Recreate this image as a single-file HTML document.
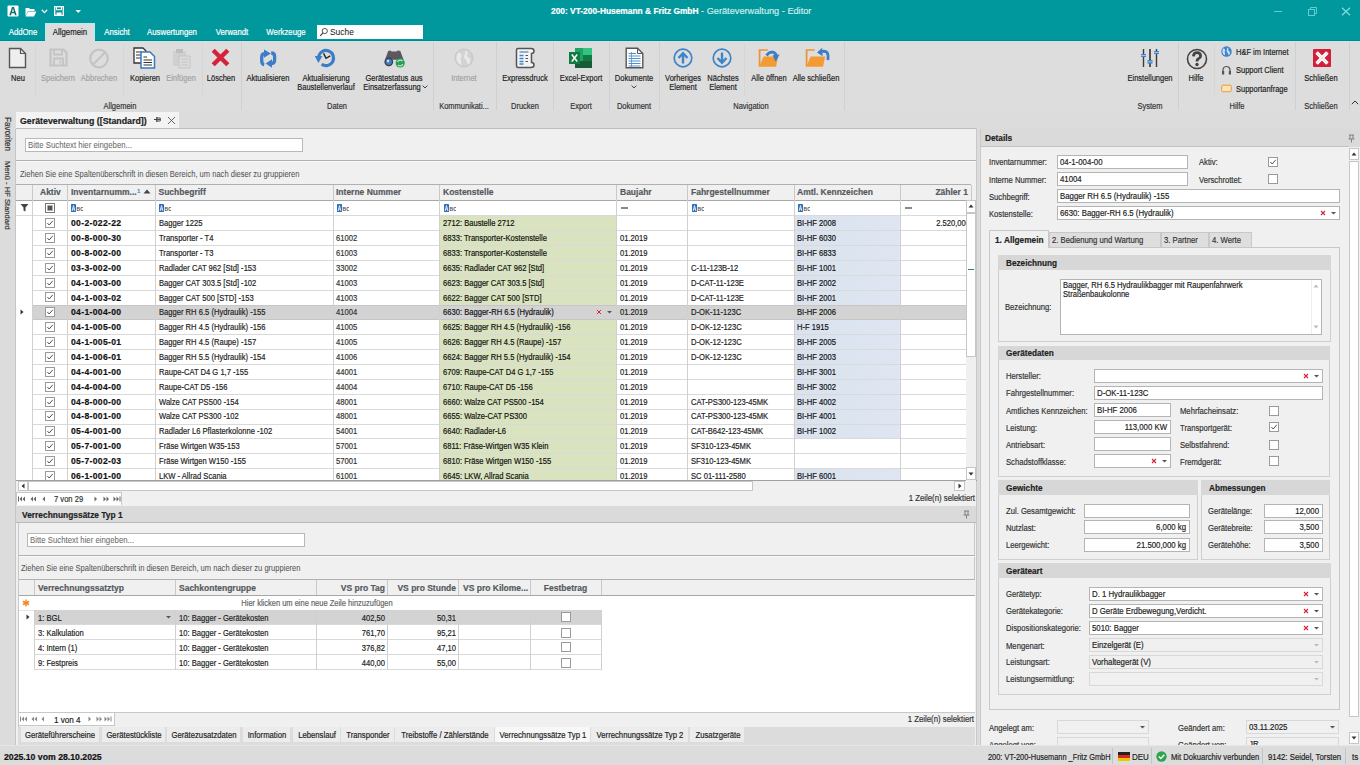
<!DOCTYPE html>
<html><head><meta charset="utf-8"><style>
html,body{margin:0;padding:0;width:1360px;height:765px;overflow:hidden;background:#dcdcdc}
body{position:relative;font-family:"Liberation Sans",sans-serif}
body div{position:absolute;box-sizing:border-box;-webkit-text-stroke:0.18px currentColor}
</style></head><body>
<div style="left:0px;top:0px;width:1360px;height:41px;background:#00979d"></div><div style="left:0px;top:40px;width:1360px;height:1px;background:#167f86"></div><svg style="position:absolute;left:7px;top:5px" width="12" height="12" viewBox="0 0 12 12"><rect x="0.5" y="0.5" width="11" height="11" rx="1" fill="#fff"/><path d="M2.3 10.2 L5 2 L7 2 L9.7 10.2 L8 10.2 L7.4 8.2 L4.6 8.2 L4 10.2Z M5 6.8 L7 6.8 L6 3.6Z" fill="#0b6f74"/></svg><svg style="position:absolute;left:25px;top:6px" width="12" height="11" viewBox="0 0 12 11"><path d="M0.5 2 L4 2 L5 3 L9.5 3 L9.5 5 L3 5 L0.5 10Z" fill="#fff"/><path d="M3 5.5 L11.5 5.5 L9 10.5 L0.5 10.5Z" fill="#fff"/></svg><svg style="position:absolute;left:41px;top:9px" width="7" height="5" viewBox="0 0 7 5"><path d="M0.8 0.8 L3.5 3.6 L6.2 0.8" stroke="#fff" stroke-width="1.3" fill="none"/></svg><svg style="position:absolute;left:54px;top:6px" width="10" height="10" viewBox="0 0 10 10"><path d="M0.7 0.7 H9.3 V9.3 H0.7Z" stroke="#fff" stroke-width="1.3" fill="none"/><rect x="2.5" y="0.7" width="5" height="3" fill="none" stroke="#fff" stroke-width="1"/><rect x="2.5" y="6.5" width="5" height="2.8" fill="#fff"/></svg><svg style="position:absolute;left:75px;top:9px" width="7" height="5" viewBox="0 0 7 5"><path d="M0.5 1 L6 1 L3.25 4Z" fill="#fff"/></svg><div style="left:551px;top:5px;height:12px;line-height:12px;white-space:nowrap;font-size:8.4px;color:#fff"><b>200: VT-200-Husemann &amp; Fritz GmbH</b><span style="color:#cfeeee;font-size:9.2px"> - Geräteverwaltung - Editor</span></div><div style="left:1274px;top:11px;width:7.5px;height:1px;background:#62cdd2"></div><svg style="position:absolute;left:1307px;top:7px" width="10" height="9" viewBox="0 0 10 9"><rect x="1.5" y="2.5" width="6" height="6" fill="none" stroke="#62cdd2"/><path d="M3.5 2.5 V0.5 H9.5 V6.5 H7.5" fill="none" stroke="#62cdd2"/></svg><svg style="position:absolute;left:1341px;top:7px" width="10" height="9" viewBox="0 0 10 9"><path d="M1 0.8 L9 8.2 M9 0.8 L1 8.2" stroke="#7fe0e4" stroke-width="1.2"/></svg><div style="left:-7.5px;width:60px;text-align:center;top:26.0px;height:12px;line-height:12px;font-size:8.5px;font-weight:normal;color:#fff;white-space:nowrap;transform:scaleX(0.9176);transform-origin:center center;">AddOne</div><div style="left:45px;top:23px;width:50px;height:19px;background:#dddddd;border:1px solid #aeeff2;border-bottom:none;box-sizing:border-box"></div><div style="left:40.0px;width:60px;text-align:center;top:26.0px;height:12px;line-height:12px;font-size:8.5px;font-weight:normal;color:#222;white-space:nowrap;transform:scaleX(0.9176);transform-origin:center center;">Allgemein</div><div style="left:86.5px;width:60px;text-align:center;top:26.0px;height:12px;line-height:12px;font-size:8.5px;font-weight:normal;color:#fff;white-space:nowrap;transform:scaleX(0.9176);transform-origin:center center;">Ansicht</div><div style="left:132.0px;width:80px;text-align:center;top:26.0px;height:12px;line-height:12px;font-size:8.5px;font-weight:normal;color:#fff;white-space:nowrap;transform:scaleX(0.9176);transform-origin:center center;">Auswertungen</div><div style="left:201.5px;width:60px;text-align:center;top:26.0px;height:12px;line-height:12px;font-size:8.5px;font-weight:normal;color:#fff;white-space:nowrap;transform:scaleX(0.9176);transform-origin:center center;">Verwandt</div><div style="left:255.5px;width:60px;text-align:center;top:26.0px;height:12px;line-height:12px;font-size:8.5px;font-weight:normal;color:#fff;white-space:nowrap;transform:scaleX(0.9176);transform-origin:center center;">Werkzeuge</div><div style="left:317px;top:25px;width:106px;height:14px;background:#fff"></div><svg style="position:absolute;left:319px;top:27px" width="10" height="10" viewBox="0 0 10 10"><circle cx="5.8" cy="4" r="2.6" fill="none" stroke="#444" stroke-width="0.9"/><path d="M3.9 6 L1.2 8.8" stroke="#444" stroke-width="1.1"/></svg><div style="left:329.5px;top:26.0px;height:12px;line-height:12px;font-size:8.5px;font-weight:normal;color:#111;white-space:nowrap;transform:scaleX(0.9882);transform-origin:left center;-webkit-text-stroke:0">Suche</div><div style="left:0px;top:41px;width:1360px;height:71px;background:#dddddd"></div><div style="left:0px;top:41px;width:1360px;height:1px;background:#aeeff2"></div><div style="left:45px;top:40px;width:50px;height:2px;background:#dddddd"></div><div style="left:0px;top:111px;width:1360px;height:1px;background:#cdcdcd"></div><div style="left:241px;top:42px;width:1px;height:68px;background:#d0d0d0"></div><div style="left:433px;top:42px;width:1px;height:68px;background:#d0d0d0"></div><div style="left:496px;top:42px;width:1px;height:68px;background:#d0d0d0"></div><div style="left:553px;top:42px;width:1px;height:68px;background:#d0d0d0"></div><div style="left:609px;top:42px;width:1px;height:68px;background:#d0d0d0"></div><div style="left:659px;top:42px;width:1px;height:68px;background:#d0d0d0"></div><div style="left:844px;top:42px;width:1px;height:68px;background:#d0d0d0"></div><div style="left:1178px;top:42px;width:1px;height:68px;background:#d0d0d0"></div><div style="left:1295px;top:42px;width:1px;height:68px;background:#d0d0d0"></div><div style="left:1349px;top:42px;width:1px;height:68px;background:#d0d0d0"></div><div style="left:35px;top:44px;width:1px;height:51px;background:#d6d6d6"></div><div style="left:123px;top:44px;width:1px;height:51px;background:#d6d6d6"></div><div style="left:202px;top:44px;width:1px;height:51px;background:#d6d6d6"></div><div style="left:744px;top:44px;width:1px;height:51px;background:#d6d6d6"></div><div style="left:1214px;top:44px;width:1px;height:51px;background:#d6d6d6"></div><svg style="position:absolute;left:8px;top:47px" width="20" height="22" viewBox="0 0 20 22"><path d="M1.5 1.5 H12.5 L17.5 6.5 V20.5 H1.5Z" fill="#eeeeee" stroke="#555" stroke-width="1.4" stroke-linejoin="miter"/><path d="M12.5 1.5 V6.5 H17.5" fill="none" stroke="#555" stroke-width="1.2"/></svg><div style="left:-42.5px;width:120px;text-align:center;top:71.5px;height:12px;line-height:12px;font-size:8.5px;font-weight:normal;color:#222;white-space:nowrap;transform:scaleX(0.8824);transform-origin:center center;">Neu</div><svg style="position:absolute;left:49px;top:48px" width="19" height="19" viewBox="0 0 19 19"><path d="M1.5 1.5 H14.5 L17.5 4.5 V17.5 H1.5Z" fill="none" stroke="#c4c4c4" stroke-width="2.2"/><path d="M5 2 V6.5 H13 V2" fill="none" stroke="#c4c4c4" stroke-width="1.8"/><path d="M5 17 V10.5 H14 V17" fill="none" stroke="#c4c4c4" stroke-width="1.8"/><rect x="10.5" y="12.5" width="1.6" height="3" fill="#c4c4c4"/></svg><div style="left:-2.0px;width:120px;text-align:center;top:71.5px;height:12px;line-height:12px;font-size:8.5px;font-weight:normal;color:#a3a3a3;white-space:nowrap;transform:scaleX(0.8824);transform-origin:center center;">Speichern</div><svg style="position:absolute;left:88px;top:47px" width="22" height="22" viewBox="0 0 22 22"><circle cx="11" cy="11.5" r="8.8" fill="none" stroke="#c4c4c4" stroke-width="2.2"/><path d="M5 17.5 L17 5.5" stroke="#c4c4c4" stroke-width="2.2"/></svg><div style="left:39.0px;width:120px;text-align:center;top:71.5px;height:12px;line-height:12px;font-size:8.5px;font-weight:normal;color:#a3a3a3;white-space:nowrap;transform:scaleX(0.8824);transform-origin:center center;">Abbrechen</div><svg style="position:absolute;left:133px;top:47px" width="24" height="22" viewBox="0 0 24 22"><path d="M1 1 H10 L13 4 V16 H1Z" fill="#fff" stroke="#333" stroke-width="1.3"/><path d="M3 5 H9 M3 8 H9 M3 11 H9" stroke="#333" stroke-width="1"/><path d="M8 5 H17 L21.5 9.5 V21 H8Z" fill="#fff" stroke="#3a78c0" stroke-width="1.5"/><path d="M10.5 10 H14 M10.5 13 H19 M10.5 15.5 H19 M10.5 18 H19" stroke="#333" stroke-width="1.2"/></svg><div style="left:84.5px;width:120px;text-align:center;top:71.5px;height:12px;line-height:12px;font-size:8.5px;font-weight:normal;color:#222;white-space:nowrap;transform:scaleX(0.8824);transform-origin:center center;">Kopieren</div><svg style="position:absolute;left:172px;top:48px" width="20" height="21" viewBox="0 0 20 21"><path d="M1 3 H14 V18 H1Z" fill="#d0d0d0"/><rect x="4" y="1" width="7" height="4" fill="#bdbdbd"/><path d="M7 8 H18 V20 H7Z" fill="#dcdcdc" stroke="#c4c4c4"/><path d="M9 11 H16 M9 14 H16 M9 17 H16" stroke="#c4c4c4"/></svg><div style="left:121.0px;width:120px;text-align:center;top:71.5px;height:12px;line-height:12px;font-size:8.5px;font-weight:normal;color:#a3a3a3;white-space:nowrap;transform:scaleX(0.8824);transform-origin:center center;">Einfügen</div><svg style="position:absolute;left:211px;top:48px" width="19" height="19" viewBox="0 0 19 19"><path d="M2.2 2.2 L16.8 16.8 M16.8 2.2 L2.2 16.8" stroke="#d5223a" stroke-width="4.4" stroke-linecap="butt"/></svg><div style="left:160.5px;width:120px;text-align:center;top:71.5px;height:12px;line-height:12px;font-size:8.5px;font-weight:normal;color:#222;white-space:nowrap;transform:scaleX(0.8824);transform-origin:center center;">Löschen</div><div style="left:60.0px;width:120px;text-align:center;top:99.5px;height:12px;line-height:12px;font-size:8.5px;font-weight:normal;color:#333;white-space:nowrap;transform:scaleX(0.8824);transform-origin:center center;">Allgemein</div><svg style="position:absolute;left:259px;top:49px" width="19" height="20" viewBox="0 0 19 20"><path d="M6 4.6 Q2.7 4.6 2.7 8.2 V11.8 Q2.7 15.3 5.2 15.6" fill="none" stroke="#3b7dc6" stroke-width="3.3"/><path d="M5 0.5 L11.9 4.6 L5 8.8Z" fill="#3b7dc6"/><path d="M12.2 4 Q15.6 4 15.6 7.4 V11 Q15.6 14.4 12.8 14.5" fill="none" stroke="#3b7dc6" stroke-width="3.3"/><path d="M13 10.2 L6.6 14.5 L13 18.8Z" fill="#3b7dc6"/></svg><div style="left:208.0px;width:120px;text-align:center;top:71.5px;height:12px;line-height:12px;font-size:8.5px;font-weight:normal;color:#222;white-space:nowrap;transform:scaleX(0.8824);transform-origin:center center;">Aktualisieren</div><svg style="position:absolute;left:313px;top:47px" width="24" height="22" viewBox="0 0 24 22"><path d="M8.6 17.3 A7.6 7.6 0 1 0 5.6 9.2" fill="none" stroke="#3b7dc6" stroke-width="3.2"/><path d="M1.8 9 L9.4 9 L5.4 15.9Z" fill="#3b7dc6"/><path d="M10.6 6.4 L13 11.3 L17.3 8.8" fill="none" stroke="#2a2a2a" stroke-width="1.5"/></svg><div style="left:265.5px;width:120px;text-align:center;top:71.5px;height:12px;line-height:12px;font-size:8.5px;font-weight:normal;color:#222;white-space:nowrap;transform:scaleX(0.8824);transform-origin:center center;">Aktualisierung</div><div style="left:265.5px;width:120px;text-align:center;top:81.3px;height:12px;line-height:12px;font-size:8.5px;font-weight:normal;color:#222;white-space:nowrap;transform:scaleX(0.8824);transform-origin:center center;">Baustellenverlauf</div><svg style="position:absolute;left:383px;top:49px" width="22" height="20" viewBox="0 0 22 20"><path d="M5.2 2 Q5.6 1.5 7.5 1.5 L8.6 2.6 L13.6 2.6 L14.7 1.5 Q16.8 1.5 17.3 2 L20.6 10.8 L2 10.8Z" fill="#5a5a5e"/><circle cx="5.8" cy="12.8" r="4.4" fill="#3e3e42"/><circle cx="5.8" cy="12.8" r="3.1" fill="#3f7fcc"/><circle cx="5" cy="12" r="1.2" fill="#cfe3f7"/><circle cx="17.2" cy="14" r="4.6" fill="#2f9a57"/><path d="M14.6 13 A2.7 2.7 0 0 1 19.4 12.2 M19.8 15 A2.7 2.7 0 0 1 15 15.8" stroke="#a9efc0" stroke-width="1.3" fill="none"/></svg><div style="left:334.0px;width:120px;text-align:center;top:71.5px;height:12px;line-height:12px;font-size:8.5px;font-weight:normal;color:#222;white-space:nowrap;transform:scaleX(0.8824);transform-origin:center center;">Gerätestatus aus</div><div style="left:332.0px;width:120px;text-align:center;top:81.3px;height:12px;line-height:12px;font-size:8.5px;font-weight:normal;color:#222;white-space:nowrap;transform:scaleX(0.8824);transform-origin:center center;">Einsatzerfassung</div><svg style="position:absolute;left:422px;top:85px" width="6" height="4" viewBox="0 0 6 4"><path d="M0.6 0.6 L3 3 L5.4 0.6" stroke="#333" fill="none" stroke-width="0.9"/></svg><div style="left:277.0px;width:120px;text-align:center;top:99.5px;height:12px;line-height:12px;font-size:8.5px;font-weight:normal;color:#333;white-space:nowrap;transform:scaleX(0.8824);transform-origin:center center;">Daten</div><svg style="position:absolute;left:454px;top:48px" width="20" height="20" viewBox="0 0 20 20"><circle cx="10" cy="10" r="9" fill="#d2d2d2" stroke="#c6c6c6" stroke-width="1"/><path d="M4.5 4.2 Q8 5.5 7.5 8.5 Q5.5 10.5 7.5 13.5 L6.8 17 Q2.5 14.5 2.5 10 Q2.5 6.5 4.5 4.2Z M11.5 2.5 Q15 4 13.2 6.5 Q12 8.5 15 9.5 Q17.5 11.5 15.2 15.8 Q13.2 17 13 14 Q12.2 12 11 11 Q9 9 11 6Z" fill="#e9e9e9"/></svg><div style="left:404.0px;width:120px;text-align:center;top:71.5px;height:12px;line-height:12px;font-size:8.5px;font-weight:normal;color:#a3a3a3;white-space:nowrap;transform:scaleX(0.8824);transform-origin:center center;">Internet</div><div style="left:404.0px;width:120px;text-align:center;top:99.5px;height:12px;line-height:12px;font-size:8.5px;font-weight:normal;color:#333;white-space:nowrap;transform:scaleX(0.8824);transform-origin:center center;">Kommunikati...</div><svg style="position:absolute;left:515px;top:47px" width="22" height="22" viewBox="0 0 22 22"><path d="M3 1.5 H16 Q19 1.5 19 4 Q19 6.5 16.5 6.5 L16.5 15.5 Q19 15.5 19 18 Q19 20.5 16 20.5 H3 Q1.5 20.5 1.5 19 V3 Q1.5 1.5 3 1.5Z" fill="#f4f4f4" stroke="#555" stroke-width="1.5"/><path d="M4.5 5 H13.5" stroke="#3d84c8" stroke-width="1.2"/><path d="M4.5 8.5 H8.5 M4.5 11.5 H8.5 M4.5 14.5 H8.5 M4.5 17 H8.5" stroke="#3d84c8" stroke-width="1.3"/><path d="M10.5 8.5 H13 M10.5 11.5 H13 M10.5 14.5 H13" stroke="#555" stroke-width="1.2"/></svg><div style="left:464.5px;width:120px;text-align:center;top:71.5px;height:12px;line-height:12px;font-size:8.5px;font-weight:normal;color:#222;white-space:nowrap;transform:scaleX(0.8824);transform-origin:center center;">Expressdruck</div><div style="left:464.5px;width:120px;text-align:center;top:99.5px;height:12px;line-height:12px;font-size:8.5px;font-weight:normal;color:#333;white-space:nowrap;transform:scaleX(0.8824);transform-origin:center center;">Drucken</div><svg style="position:absolute;left:569px;top:48px" width="24" height="21" viewBox="0 0 24 21"><rect x="6" y="0" width="17" height="20" fill="#21a366"/><rect x="14" y="0" width="9" height="7" fill="#33c481"/><rect x="6" y="13" width="17" height="7" fill="#185c37"/><rect x="14" y="7" width="9" height="6" fill="#107c41"/><rect x="0" y="4" width="11" height="12" fill="#107c41"/><path d="M2.8 6.5 L8.2 13.5 M8.2 6.5 L2.8 13.5" stroke="#fff" stroke-width="1.5"/></svg><div style="left:521.0px;width:120px;text-align:center;top:71.5px;height:12px;line-height:12px;font-size:8.5px;font-weight:normal;color:#222;white-space:nowrap;transform:scaleX(0.8824);transform-origin:center center;">Excel-Export</div><div style="left:520.5px;width:120px;text-align:center;top:99.5px;height:12px;line-height:12px;font-size:8.5px;font-weight:normal;color:#333;white-space:nowrap;transform:scaleX(0.8824);transform-origin:center center;">Export</div><svg style="position:absolute;left:625px;top:47px" width="19" height="22" viewBox="0 0 19 22"><path d="M1.2 1.2 H12.5 L17.8 6.5 V20.8 H1.2Z" fill="#fff" stroke="#555" stroke-width="1.4"/><path d="M12.5 1.2 V6.5 H17.8" fill="none" stroke="#555" stroke-width="1"/><path d="M3.5 6.5 H11 M3.5 9 H15.5 M3.5 11.5 H15.5 M3.5 14 H15.5 M3.5 16.5 H15.5 M3.5 19 H15.5" stroke="#4e8fd0" stroke-width="1"/><path d="M6.5 5 V20" stroke="#4e8fd0" stroke-width="0.8"/></svg><div style="left:573.5px;width:120px;text-align:center;top:71.5px;height:12px;line-height:12px;font-size:8.5px;font-weight:normal;color:#222;white-space:nowrap;transform:scaleX(0.8824);transform-origin:center center;">Dokumente</div><div style="left:573.5px;width:120px;text-align:center;top:99.5px;height:12px;line-height:12px;font-size:8.5px;font-weight:normal;color:#333;white-space:nowrap;transform:scaleX(0.8824);transform-origin:center center;">Dokument</div><svg style="position:absolute;left:631px;top:85px" width="6" height="4" viewBox="0 0 6 4"><path d="M0.6 0.6 L3 3 L5.4 0.6" stroke="#333" fill="none" stroke-width="0.9"/></svg><svg style="position:absolute;left:673px;top:48px" width="20" height="20" viewBox="0 0 20 20"><circle cx="10" cy="10" r="8.8" fill="none" stroke="#3d84c8" stroke-width="1.7"/><path d="M10 15.5 V5.5 M5.5 10 L10 5.2 L14.5 10" fill="none" stroke="#3d84c8" stroke-width="2.4"/></svg><div style="left:623.0px;width:120px;text-align:center;top:71.5px;height:12px;line-height:12px;font-size:8.5px;font-weight:normal;color:#222;white-space:nowrap;transform:scaleX(0.8824);transform-origin:center center;">Vorheriges</div><div style="left:623.0px;width:120px;text-align:center;top:81.3px;height:12px;line-height:12px;font-size:8.5px;font-weight:normal;color:#222;white-space:nowrap;transform:scaleX(0.8824);transform-origin:center center;">Element</div><svg style="position:absolute;left:712px;top:48px" width="20" height="20" viewBox="0 0 20 20"><circle cx="10" cy="10" r="8.8" fill="none" stroke="#3d84c8" stroke-width="1.7"/><path d="M10 4.5 V14.5 M5.5 10 L10 14.8 L14.5 10" fill="none" stroke="#3d84c8" stroke-width="2.4"/></svg><div style="left:662.5px;width:120px;text-align:center;top:71.5px;height:12px;line-height:12px;font-size:8.5px;font-weight:normal;color:#222;white-space:nowrap;transform:scaleX(0.8824);transform-origin:center center;">Nächstes</div><div style="left:662.5px;width:120px;text-align:center;top:81.3px;height:12px;line-height:12px;font-size:8.5px;font-weight:normal;color:#222;white-space:nowrap;transform:scaleX(0.8824);transform-origin:center center;">Element</div><svg style="position:absolute;left:757px;top:47px" width="28" height="22" viewBox="0 0 28 22"><path d="M2.6 19.6 V3 H10.8" fill="none" stroke="#ec9235" stroke-width="1.7"/><path d="M6.6 9.6 L21.2 9.6 L19 19.8 L2.2 19.8Z" fill="#f39a33"/><path d="M9.5 8.5 Q14.5 1.8 19.6 8" fill="none" stroke="#3b7dc6" stroke-width="2.8"/><path d="M15.6 8.2 L22.6 7.6 L18.6 14.8Z" fill="#3b7dc6"/></svg><div style="left:708.5px;width:120px;text-align:center;top:71.5px;height:12px;line-height:12px;font-size:8.5px;font-weight:normal;color:#222;white-space:nowrap;transform:scaleX(0.8824);transform-origin:center center;">Alle öffnen</div><svg style="position:absolute;left:804px;top:47px" width="28" height="22" viewBox="0 0 28 22"><path d="M2.6 19.6 V3 H10.8" fill="none" stroke="#ec9235" stroke-width="1.7"/><path d="M6.6 9.6 L21.2 9.6 L19 19.8 L2.2 19.8Z" fill="#f39a33"/><path d="M23.8 13 Q25.5 2.5 17.5 4.6" fill="none" stroke="#3b7dc6" stroke-width="2.8"/><path d="M18.2 0.8 L13 5.6 L18.6 9.2Z" fill="#3b7dc6"/></svg><div style="left:755.5px;width:120px;text-align:center;top:71.5px;height:12px;line-height:12px;font-size:8.5px;font-weight:normal;color:#222;white-space:nowrap;transform:scaleX(0.8824);transform-origin:center center;">Alle schließen</div><div style="left:690.5px;width:120px;text-align:center;top:99.5px;height:12px;line-height:12px;font-size:8.5px;font-weight:normal;color:#333;white-space:nowrap;transform:scaleX(0.8824);transform-origin:center center;">Navigation</div><svg style="position:absolute;left:1140px;top:48px" width="20" height="20" viewBox="0 0 20 20"><path d="M3.5 1 V19 M16.5 1 V19" stroke="#3c3c3c" stroke-width="1.4"/><path d="M10 1 V19" stroke="#555" stroke-width="2"/><rect x="1" y="6" width="5" height="3" fill="#3d84c8"/><rect x="7.5" y="12" width="5" height="3.6" fill="#3d84c8"/><rect x="14" y="3" width="5" height="3" fill="#3d84c8"/><path d="M1 7.5 H6 M7.5 13.8 H12.5 M14 4.5 H19" stroke="#bfe0fb" stroke-width="0.7"/></svg><div style="left:1089.5px;width:120px;text-align:center;top:71.5px;height:12px;line-height:12px;font-size:8.5px;font-weight:normal;color:#222;white-space:nowrap;transform:scaleX(0.8824);transform-origin:center center;">Einstellungen</div><div style="left:1089.5px;width:120px;text-align:center;top:99.5px;height:12px;line-height:12px;font-size:8.5px;font-weight:normal;color:#333;white-space:nowrap;transform:scaleX(0.8824);transform-origin:center center;">System</div><svg style="position:absolute;left:1186px;top:48px" width="22" height="22" viewBox="0 0 22 22"><circle cx="11" cy="11" r="9.5" fill="none" stroke="#444" stroke-width="1.6"/><path d="M7.4 8.4 Q7.6 4.6 11 4.6 Q14.6 4.6 14.6 7.9 Q14.6 9.8 12.4 10.8 Q11 11.5 11 13.4" fill="none" stroke="#444" stroke-width="2.8"/><circle cx="11" cy="16.5" r="1.7" fill="#444"/></svg><div style="left:1136.0px;width:120px;text-align:center;top:71.5px;height:12px;line-height:12px;font-size:8.5px;font-weight:normal;color:#222;white-space:nowrap;transform:scaleX(0.8824);transform-origin:center center;">Hilfe</div><div style="left:1176.5px;width:120px;text-align:center;top:99.5px;height:12px;line-height:12px;font-size:8.5px;font-weight:normal;color:#333;white-space:nowrap;transform:scaleX(0.8824);transform-origin:center center;">Hilfe</div><svg style="position:absolute;left:1221px;top:46px" width="11" height="11" viewBox="0 0 20 20"><circle cx="10" cy="10" r="9.5" fill="#3d84c8"/><path d="M4.5 4.2 Q8 5.5 7.5 8.5 Q5.5 10.5 7.5 13.5 L6.8 17 Q2.5 14.5 2.5 10 Q2.5 6.5 4.5 4.2Z M11.5 2.5 Q15 4 13.2 6.5 Q12 8.5 15 9.5 Q17.5 11.5 15.2 15.8 Q13.2 17 13 14 Q12.2 12 11 11 Q9 9 11 6Z" fill="#cfe3f7"/></svg><div style="left:1235.5px;top:45.5px;height:12px;line-height:12px;font-size:8.5px;font-weight:normal;color:#222;white-space:nowrap;transform:scaleX(0.8824);transform-origin:left center;">H&amp;F im Internet</div><svg style="position:absolute;left:1221px;top:65px" width="11" height="11" viewBox="0 0 11 11"><path d="M2 7 V5 A3.5 3.5 0 0 1 9 5 V7" fill="none" stroke="#555" stroke-width="1.2"/><rect x="1" y="6" width="2.2" height="3.5" fill="#555"/><rect x="7.8" y="6" width="2.2" height="3.5" fill="#555"/></svg><div style="left:1235.5px;top:64.3px;height:12px;line-height:12px;font-size:8.5px;font-weight:normal;color:#222;white-space:nowrap;transform:scaleX(0.8824);transform-origin:left center;">Support Client</div><svg style="position:absolute;left:1221px;top:84px" width="11" height="9" viewBox="0 0 11 9"><rect x="0.7" y="1.2" width="9.6" height="6.5" rx="1" fill="#fde2b8" stroke="#e99a3a" stroke-width="1"/></svg><div style="left:1235.5px;top:82.6px;height:12px;line-height:12px;font-size:8.5px;font-weight:normal;color:#222;white-space:nowrap;transform:scaleX(0.8824);transform-origin:left center;">Supportanfrage</div><svg style="position:absolute;left:1313px;top:49px" width="18" height="18" viewBox="0 0 18 18"><rect x="0" y="0" width="18" height="18" rx="1" fill="#d41f3a"/><path d="M3.6 3.6 L14.4 14.4 M14.4 3.6 L3.6 14.4" stroke="#fff" stroke-width="3.6"/><path d="M3.6 3.6 L14.4 14.4 M14.4 3.6 L3.6 14.4" stroke="#f6d9de" stroke-width="1"/></svg><div style="left:1261.0px;width:120px;text-align:center;top:71.5px;height:12px;line-height:12px;font-size:8.5px;font-weight:normal;color:#222;white-space:nowrap;transform:scaleX(0.8824);transform-origin:center center;">Schließen</div><div style="left:1261.0px;width:120px;text-align:center;top:99.5px;height:12px;line-height:12px;font-size:8.5px;font-weight:normal;color:#333;white-space:nowrap;transform:scaleX(0.8824);transform-origin:center center;">Schließen</div><svg style="position:absolute;left:1351px;top:100px" width="8" height="5" viewBox="0 0 8 5"><path d="M0.8 4.2 L4 1 L7.2 4.2" stroke="#333" fill="none" stroke-width="1"/></svg><div style="left:0px;top:111px;width:1360px;height:654px;background:#dcdcdc"></div><div style="left:16px;top:112px;width:163px;height:17px;background:#f3f3f3"></div><div style="left:20px;top:114.5px;height:12px;line-height:12px;font-size:8.5px;font-weight:bold;color:#222;white-space:nowrap;transform:scaleX(1.0353);transform-origin:left center;">Geräteverwaltung ([Standard])</div><svg style="position:absolute;left:153px;top:115px" width="9" height="9" viewBox="0 0 9 9"><path d="M1 4.5 H3.8 M3.8 2 V7" stroke="#444" stroke-width="1.2" fill="none"/><path d="M3.8 3 H7.3 V6 H3.8 M3.8 4.5 H7.3" stroke="#444" stroke-width="0.9" fill="none"/></svg><svg style="position:absolute;left:167px;top:116px" width="9" height="9" viewBox="0 0 9 9"><path d="M1 1 L8 8 M8 1 L1 8" stroke="#555" stroke-width="0.9"/></svg><div style="left:0px;top:111px;width:15px;height:637px;background:#dcdcdc"></div><div style="left:15px;top:129px;width:1px;height:619px;background:#c5c5c5"></div><div style="left:1px;top:117px;width:12px;height:40px;"><div style="position:absolute;left:0;top:0;transform-origin:0 0;transform:translate(12px,0) rotate(90deg);white-space:nowrap;font-size:8.2px;line-height:12px;color:#333">Favoriten</div></div><div style="left:1px;top:161px;width:12px;height:80px;"><div style="position:absolute;left:0;top:0;transform-origin:0 0;transform:translate(12px,0) rotate(90deg);white-space:nowrap;font-size:7.6px;line-height:12px;color:#333">Menü - HF Standard</div></div><div style="left:16px;top:128px;width:961px;height:620px;background:#f0f0f0"></div><div style="left:16px;top:128px;width:961px;height:1px;background:#bdbdbd"></div><div style="left:976px;top:128px;width:1px;height:620px;background:#c8c8c8"></div><div style="left:25px;top:138px;width:278px;height:14px;background:#fff;border:1px solid #b8b8b8;box-sizing:border-box"></div><div style="left:28px;top:139.0px;height:12px;line-height:12px;font-size:8.5px;font-weight:normal;color:#6a6a6a;white-space:nowrap;transform:scaleX(0.9176);transform-origin:left center;-webkit-text-stroke:0.05px currentColor">Bitte Suchtext hier eingeben...</div><div style="left:16px;top:160px;width:960px;height:1px;background:#b0b0b0"></div><div style="left:16px;top:161px;width:960px;height:1px;background:#fafafa"></div><div style="left:20px;top:167.5px;height:12px;line-height:12px;font-size:8.5px;font-weight:normal;color:#555;white-space:nowrap;transform:scaleX(0.8882);transform-origin:left center;-webkit-text-stroke:0.05px currentColor">Ziehen Sie eine Spaltenüberschrift in diesen Bereich, um nach dieser zu gruppieren</div><div style="left:16px;top:184px;width:950px;height:297px;background:#fff"></div><div style="left:16px;top:184px;width:955px;height:16px;background:#f0f0f0"></div><div style="left:16px;top:184px;width:955px;height:1px;background:#b0b0b0"></div><div style="left:16px;top:200px;width:950px;height:1px;background:#a8a8a8"></div><div style="left:32px;top:185px;width:1px;height:15px;background:#c9c9c9"></div><div style="left:67px;top:185px;width:1px;height:15px;background:#c9c9c9"></div><div style="left:155px;top:185px;width:1px;height:15px;background:#c9c9c9"></div><div style="left:333px;top:185px;width:1px;height:15px;background:#c9c9c9"></div><div style="left:439px;top:185px;width:1px;height:15px;background:#c9c9c9"></div><div style="left:616px;top:185px;width:1px;height:15px;background:#c9c9c9"></div><div style="left:687px;top:185px;width:1px;height:15px;background:#c9c9c9"></div><div style="left:794px;top:185px;width:1px;height:15px;background:#c9c9c9"></div><div style="left:900px;top:185px;width:1px;height:15px;background:#c9c9c9"></div><div style="left:971px;top:185px;width:1px;height:15px;background:#c9c9c9"></div><div style="left:40px;top:186.0px;height:12px;line-height:12px;font-size:8.5px;font-weight:bold;color:#555a60;white-space:nowrap;">Aktiv</div><div style="left:71px;top:186.0px;height:12px;line-height:12px;font-size:8.5px;font-weight:bold;color:#555a60;white-space:nowrap;">Inventarnumm...</div><svg style="position:absolute;left:137px;top:188px" width="5" height="6" viewBox="0 0 5 6"><text x="0" y="5" font-size="6" font-family="Liberation Sans" fill="#3d7fc8" font-weight="bold">1</text></svg><svg style="position:absolute;left:143px;top:189px" width="8" height="5" viewBox="0 0 8 5"><path d="M0.5 4.5 L4 0.5 L7.5 4.5Z" fill="#444"/></svg><div style="left:158.5px;top:186.0px;height:12px;line-height:12px;font-size:8.5px;font-weight:bold;color:#555a60;white-space:nowrap;">Suchbegriff</div><div style="left:336px;top:186.0px;height:12px;line-height:12px;font-size:8.5px;font-weight:bold;color:#555a60;white-space:nowrap;">Interne Nummer</div><div style="left:443px;top:186.0px;height:12px;line-height:12px;font-size:8.5px;font-weight:bold;color:#555a60;white-space:nowrap;">Kostenstelle</div><div style="left:620px;top:186.0px;height:12px;line-height:12px;font-size:8.5px;font-weight:bold;color:#555a60;white-space:nowrap;">Baujahr</div><div style="left:691px;top:186.0px;height:12px;line-height:12px;font-size:8.5px;font-weight:bold;color:#555a60;white-space:nowrap;">Fahrgestellnummer</div><div style="left:797px;top:186.0px;height:12px;line-height:12px;font-size:8.5px;font-weight:bold;color:#555a60;white-space:nowrap;">Amtl. Kennzeichen</div><div style="left:888px;width:80px;text-align:right;top:186.0px;height:12px;line-height:12px;font-size:8.5px;font-weight:bold;color:#555a60;white-space:nowrap;">Zähler 1</div><svg style="position:absolute;left:20px;top:203px" width="9" height="9" viewBox="0 0 9 9"><path d="M0.5 1 H8.5 L5.5 4.5 V8.5 L3.5 7.5 V4.5Z" fill="#444"/></svg><svg style="position:absolute;left:45px;top:203px" width="10" height="10" viewBox="0 0 10 10"><rect x="0.5" y="0.5" width="9" height="9" fill="#fff" stroke="#777"/><rect x="2.5" y="2.5" width="5" height="5" fill="#555"/></svg><svg style="position:absolute;left:71px;top:204px" width="12" height="8" viewBox="0 0 12 8"><rect x="0" y="0" width="5" height="8" rx="0.6" fill="#2f6fb8"/><path d="M1.1 7 L2.5 1.6 L3.9 7 M1.6 5 H3.4" stroke="#e6f0fb" stroke-width="0.9" fill="none"/><text x="5.6" y="6.6" font-size="5" font-weight="bold" font-family="Liberation Sans" fill="#555">BC</text></svg><svg style="position:absolute;left:159px;top:204px" width="12" height="8" viewBox="0 0 12 8"><rect x="0" y="0" width="5" height="8" rx="0.6" fill="#2f6fb8"/><path d="M1.1 7 L2.5 1.6 L3.9 7 M1.6 5 H3.4" stroke="#e6f0fb" stroke-width="0.9" fill="none"/><text x="5.6" y="6.6" font-size="5" font-weight="bold" font-family="Liberation Sans" fill="#555">BC</text></svg><svg style="position:absolute;left:337px;top:204px" width="12" height="8" viewBox="0 0 12 8"><rect x="0" y="0" width="5" height="8" rx="0.6" fill="#2f6fb8"/><path d="M1.1 7 L2.5 1.6 L3.9 7 M1.6 5 H3.4" stroke="#e6f0fb" stroke-width="0.9" fill="none"/><text x="5.6" y="6.6" font-size="5" font-weight="bold" font-family="Liberation Sans" fill="#555">BC</text></svg><svg style="position:absolute;left:444px;top:204px" width="12" height="8" viewBox="0 0 12 8"><rect x="0" y="0" width="5" height="8" rx="0.6" fill="#2f6fb8"/><path d="M1.1 7 L2.5 1.6 L3.9 7 M1.6 5 H3.4" stroke="#e6f0fb" stroke-width="0.9" fill="none"/><text x="5.6" y="6.6" font-size="5" font-weight="bold" font-family="Liberation Sans" fill="#555">BC</text></svg><svg style="position:absolute;left:692px;top:204px" width="12" height="8" viewBox="0 0 12 8"><rect x="0" y="0" width="5" height="8" rx="0.6" fill="#2f6fb8"/><path d="M1.1 7 L2.5 1.6 L3.9 7 M1.6 5 H3.4" stroke="#e6f0fb" stroke-width="0.9" fill="none"/><text x="5.6" y="6.6" font-size="5" font-weight="bold" font-family="Liberation Sans" fill="#555">BC</text></svg><svg style="position:absolute;left:798px;top:204px" width="12" height="8" viewBox="0 0 12 8"><rect x="0" y="0" width="5" height="8" rx="0.6" fill="#2f6fb8"/><path d="M1.1 7 L2.5 1.6 L3.9 7 M1.6 5 H3.4" stroke="#e6f0fb" stroke-width="0.9" fill="none"/><text x="5.6" y="6.6" font-size="5" font-weight="bold" font-family="Liberation Sans" fill="#555">BC</text></svg><div style="left:621px;top:207px;width:7px;height:2px;background:#8a8a8a"></div><div style="left:905px;top:207px;width:7px;height:2px;background:#8a8a8a"></div><div style="left:16px;top:215px;width:950px;height:1px;background:#dadada"></div><div style="left:439px;top:216px;width:177px;height:14px;background:#d9e3bf"></div><div style="left:794px;top:216px;width:106px;height:14px;background:linear-gradient(90deg,#d9e2ee,#dfe6f1)"></div><svg style="position:absolute;left:45px;top:218px" width="10" height="10" viewBox="0 0 10 10"><rect x="0.5" y="0.5" width="9" height="9" fill="#fff" stroke="#9a9a9a"/><path d="M2.4 5.0 L4.2 7.0 L7.8 2.8" fill="none" stroke="#505050" stroke-width="1"/></svg><div style="left:71px;top:217.14999999999998px;height:12px;line-height:12px;font-size:8.6px;font-weight:bold;color:#111;white-space:nowrap;letter-spacing:0.33px">00-2-022-22</div><div style="left:158.5px;top:217.14999999999998px;height:12px;line-height:12px;font-size:8.5px;font-weight:normal;color:#222;white-space:nowrap;transform:scaleX(0.8941);transform-origin:left center;">Bagger 1225</div><div style="left:336px;top:217.14999999999998px;height:12px;line-height:12px;font-size:8.5px;font-weight:normal;color:#333;white-space:nowrap;transform:scaleX(0.8941);transform-origin:left center;"></div><div style="left:443px;top:217.14999999999998px;height:12px;line-height:12px;font-size:8.5px;font-weight:normal;color:#111;white-space:nowrap;transform:scaleX(0.8941);transform-origin:left center;">2712: Baustelle 2712</div><div style="left:620px;top:217.14999999999998px;height:12px;line-height:12px;font-size:8.5px;font-weight:normal;color:#222;white-space:nowrap;transform:scaleX(0.8941);transform-origin:left center;"></div><div style="left:691px;top:217.14999999999998px;height:12px;line-height:12px;font-size:8.5px;font-weight:normal;color:#222;white-space:nowrap;transform:scaleX(0.8941);transform-origin:left center;"></div><div style="left:797px;top:217.14999999999998px;height:12px;line-height:12px;font-size:8.5px;font-weight:normal;color:#111;white-space:nowrap;transform:scaleX(0.8941);transform-origin:left center;">BI-HF 2008</div><div style="left:900px;top:217.14999999999998px;width:66px;height:12px;overflow:hidden"><div style="position:absolute;left:0;top:0;width:70px;text-align:right;line-height:12px;font-size:8.5px;transform:scaleX(0.894);transform-origin:right center;color:#222;white-space:nowrap">2.520,000</div></div><div style="left:32px;top:230px;width:934px;height:1px;background:#d9d9d9"></div><div style="left:439px;top:231px;width:177px;height:14px;background:#d9e3bf"></div><div style="left:794px;top:231px;width:106px;height:14px;background:linear-gradient(90deg,#d9e2ee,#dfe6f1)"></div><svg style="position:absolute;left:45px;top:233px" width="10" height="10" viewBox="0 0 10 10"><rect x="0.5" y="0.5" width="9" height="9" fill="#fff" stroke="#9a9a9a"/><path d="M2.4 5.0 L4.2 7.0 L7.8 2.8" fill="none" stroke="#505050" stroke-width="1"/></svg><div style="left:71px;top:232.01999999999998px;height:12px;line-height:12px;font-size:8.6px;font-weight:bold;color:#111;white-space:nowrap;letter-spacing:0.33px">00-8-000-30</div><div style="left:158.5px;top:232.01999999999998px;height:12px;line-height:12px;font-size:8.5px;font-weight:normal;color:#222;white-space:nowrap;transform:scaleX(0.8941);transform-origin:left center;">Transporter - T4</div><div style="left:336px;top:232.01999999999998px;height:12px;line-height:12px;font-size:8.5px;font-weight:normal;color:#333;white-space:nowrap;transform:scaleX(0.8941);transform-origin:left center;">61002</div><div style="left:443px;top:232.01999999999998px;height:12px;line-height:12px;font-size:8.5px;font-weight:normal;color:#111;white-space:nowrap;transform:scaleX(0.8941);transform-origin:left center;">6833: Transporter-Kostenstelle</div><div style="left:620px;top:232.01999999999998px;height:12px;line-height:12px;font-size:8.5px;font-weight:normal;color:#222;white-space:nowrap;transform:scaleX(0.8941);transform-origin:left center;">01.2019</div><div style="left:691px;top:232.01999999999998px;height:12px;line-height:12px;font-size:8.5px;font-weight:normal;color:#222;white-space:nowrap;transform:scaleX(0.8941);transform-origin:left center;"></div><div style="left:797px;top:232.01999999999998px;height:12px;line-height:12px;font-size:8.5px;font-weight:normal;color:#111;white-space:nowrap;transform:scaleX(0.8941);transform-origin:left center;">BI-HF 6030</div><div style="left:32px;top:245px;width:934px;height:1px;background:#d9d9d9"></div><div style="left:439px;top:246px;width:177px;height:14px;background:#d9e3bf"></div><div style="left:794px;top:246px;width:106px;height:14px;background:linear-gradient(90deg,#d9e2ee,#dfe6f1)"></div><svg style="position:absolute;left:45px;top:248px" width="10" height="10" viewBox="0 0 10 10"><rect x="0.5" y="0.5" width="9" height="9" fill="#fff" stroke="#9a9a9a"/><path d="M2.4 5.0 L4.2 7.0 L7.8 2.8" fill="none" stroke="#505050" stroke-width="1"/></svg><div style="left:71px;top:246.89px;height:12px;line-height:12px;font-size:8.6px;font-weight:bold;color:#111;white-space:nowrap;letter-spacing:0.33px">00-8-002-00</div><div style="left:158.5px;top:246.89px;height:12px;line-height:12px;font-size:8.5px;font-weight:normal;color:#222;white-space:nowrap;transform:scaleX(0.8941);transform-origin:left center;">Transporter - T3</div><div style="left:336px;top:246.89px;height:12px;line-height:12px;font-size:8.5px;font-weight:normal;color:#333;white-space:nowrap;transform:scaleX(0.8941);transform-origin:left center;">61003</div><div style="left:443px;top:246.89px;height:12px;line-height:12px;font-size:8.5px;font-weight:normal;color:#111;white-space:nowrap;transform:scaleX(0.8941);transform-origin:left center;">6833: Transporter-Kostenstelle</div><div style="left:620px;top:246.89px;height:12px;line-height:12px;font-size:8.5px;font-weight:normal;color:#222;white-space:nowrap;transform:scaleX(0.8941);transform-origin:left center;">01.2019</div><div style="left:691px;top:246.89px;height:12px;line-height:12px;font-size:8.5px;font-weight:normal;color:#222;white-space:nowrap;transform:scaleX(0.8941);transform-origin:left center;"></div><div style="left:797px;top:246.89px;height:12px;line-height:12px;font-size:8.5px;font-weight:normal;color:#111;white-space:nowrap;transform:scaleX(0.8941);transform-origin:left center;">BI-HF 6833</div><div style="left:32px;top:260px;width:934px;height:1px;background:#d9d9d9"></div><div style="left:439px;top:261px;width:177px;height:14px;background:#d9e3bf"></div><div style="left:794px;top:261px;width:106px;height:14px;background:linear-gradient(90deg,#d9e2ee,#dfe6f1)"></div><svg style="position:absolute;left:45px;top:263px" width="10" height="10" viewBox="0 0 10 10"><rect x="0.5" y="0.5" width="9" height="9" fill="#fff" stroke="#9a9a9a"/><path d="M2.4 5.0 L4.2 7.0 L7.8 2.8" fill="none" stroke="#505050" stroke-width="1"/></svg><div style="left:71px;top:261.76px;height:12px;line-height:12px;font-size:8.6px;font-weight:bold;color:#111;white-space:nowrap;letter-spacing:0.33px">03-3-002-00</div><div style="left:158.5px;top:261.76px;height:12px;line-height:12px;font-size:8.5px;font-weight:normal;color:#222;white-space:nowrap;transform:scaleX(0.8941);transform-origin:left center;">Radlader CAT 962 [Std] -153</div><div style="left:336px;top:261.76px;height:12px;line-height:12px;font-size:8.5px;font-weight:normal;color:#333;white-space:nowrap;transform:scaleX(0.8941);transform-origin:left center;">33002</div><div style="left:443px;top:261.76px;height:12px;line-height:12px;font-size:8.5px;font-weight:normal;color:#111;white-space:nowrap;transform:scaleX(0.8941);transform-origin:left center;">6635: Radlader CAT 962 [Std]</div><div style="left:620px;top:261.76px;height:12px;line-height:12px;font-size:8.5px;font-weight:normal;color:#222;white-space:nowrap;transform:scaleX(0.8941);transform-origin:left center;">01.2019</div><div style="left:691px;top:261.76px;height:12px;line-height:12px;font-size:8.5px;font-weight:normal;color:#222;white-space:nowrap;transform:scaleX(0.8941);transform-origin:left center;">C-11-123B-12</div><div style="left:797px;top:261.76px;height:12px;line-height:12px;font-size:8.5px;font-weight:normal;color:#111;white-space:nowrap;transform:scaleX(0.8941);transform-origin:left center;">BI-HF 1001</div><div style="left:32px;top:275px;width:934px;height:1px;background:#d9d9d9"></div><div style="left:439px;top:276px;width:177px;height:14px;background:#d9e3bf"></div><div style="left:794px;top:276px;width:106px;height:14px;background:linear-gradient(90deg,#d9e2ee,#dfe6f1)"></div><svg style="position:absolute;left:45px;top:278px" width="10" height="10" viewBox="0 0 10 10"><rect x="0.5" y="0.5" width="9" height="9" fill="#fff" stroke="#9a9a9a"/><path d="M2.4 5.0 L4.2 7.0 L7.8 2.8" fill="none" stroke="#505050" stroke-width="1"/></svg><div style="left:71px;top:276.63px;height:12px;line-height:12px;font-size:8.6px;font-weight:bold;color:#111;white-space:nowrap;letter-spacing:0.33px">04-1-003-00</div><div style="left:158.5px;top:276.63px;height:12px;line-height:12px;font-size:8.5px;font-weight:normal;color:#222;white-space:nowrap;transform:scaleX(0.8941);transform-origin:left center;">Bagger CAT 303.5 [Std] -102</div><div style="left:336px;top:276.63px;height:12px;line-height:12px;font-size:8.5px;font-weight:normal;color:#333;white-space:nowrap;transform:scaleX(0.8941);transform-origin:left center;">41003</div><div style="left:443px;top:276.63px;height:12px;line-height:12px;font-size:8.5px;font-weight:normal;color:#111;white-space:nowrap;transform:scaleX(0.8941);transform-origin:left center;">6623: Bagger CAT 303.5 [Std]</div><div style="left:620px;top:276.63px;height:12px;line-height:12px;font-size:8.5px;font-weight:normal;color:#222;white-space:nowrap;transform:scaleX(0.8941);transform-origin:left center;">01.2019</div><div style="left:691px;top:276.63px;height:12px;line-height:12px;font-size:8.5px;font-weight:normal;color:#222;white-space:nowrap;transform:scaleX(0.8941);transform-origin:left center;">D-CAT-11-123E</div><div style="left:797px;top:276.63px;height:12px;line-height:12px;font-size:8.5px;font-weight:normal;color:#111;white-space:nowrap;transform:scaleX(0.8941);transform-origin:left center;">BI-HF 2002</div><div style="left:32px;top:290px;width:934px;height:1px;background:#d9d9d9"></div><div style="left:439px;top:291px;width:177px;height:14px;background:#d9e3bf"></div><div style="left:794px;top:291px;width:106px;height:14px;background:linear-gradient(90deg,#d9e2ee,#dfe6f1)"></div><svg style="position:absolute;left:45px;top:292px" width="10" height="10" viewBox="0 0 10 10"><rect x="0.5" y="0.5" width="9" height="9" fill="#fff" stroke="#9a9a9a"/><path d="M2.4 5.0 L4.2 7.0 L7.8 2.8" fill="none" stroke="#505050" stroke-width="1"/></svg><div style="left:71px;top:291.49999999999994px;height:12px;line-height:12px;font-size:8.6px;font-weight:bold;color:#111;white-space:nowrap;letter-spacing:0.33px">04-1-003-02</div><div style="left:158.5px;top:291.49999999999994px;height:12px;line-height:12px;font-size:8.5px;font-weight:normal;color:#222;white-space:nowrap;transform:scaleX(0.8941);transform-origin:left center;">Bagger CAT 500 [STD] -153</div><div style="left:336px;top:291.49999999999994px;height:12px;line-height:12px;font-size:8.5px;font-weight:normal;color:#333;white-space:nowrap;transform:scaleX(0.8941);transform-origin:left center;">41003</div><div style="left:443px;top:291.49999999999994px;height:12px;line-height:12px;font-size:8.5px;font-weight:normal;color:#111;white-space:nowrap;transform:scaleX(0.8941);transform-origin:left center;">6622: Bagger CAT 500 [STD]</div><div style="left:620px;top:291.49999999999994px;height:12px;line-height:12px;font-size:8.5px;font-weight:normal;color:#222;white-space:nowrap;transform:scaleX(0.8941);transform-origin:left center;">01.2019</div><div style="left:691px;top:291.49999999999994px;height:12px;line-height:12px;font-size:8.5px;font-weight:normal;color:#222;white-space:nowrap;transform:scaleX(0.8941);transform-origin:left center;">D-CAT-11-123E</div><div style="left:797px;top:291.49999999999994px;height:12px;line-height:12px;font-size:8.5px;font-weight:normal;color:#111;white-space:nowrap;transform:scaleX(0.8941);transform-origin:left center;">BI-HF 2001</div><div style="left:32px;top:305px;width:934px;height:15px;background:#d3d3d3"></div><div style="left:32px;top:305px;width:934px;height:1px;background:#c6c6c6"></div><div style="left:32px;top:319px;width:934px;height:1px;background:#c6c6c6"></div><svg style="position:absolute;left:45px;top:307px" width="10" height="10" viewBox="0 0 10 10"><rect x="0.5" y="0.5" width="9" height="9" fill="#fff" stroke="#9a9a9a"/><path d="M2.4 5.0 L4.2 7.0 L7.8 2.8" fill="none" stroke="#505050" stroke-width="1"/></svg><div style="left:71px;top:306.36999999999995px;height:12px;line-height:12px;font-size:8.6px;font-weight:bold;color:#111;white-space:nowrap;letter-spacing:0.33px">04-1-004-00</div><div style="left:158.5px;top:306.36999999999995px;height:12px;line-height:12px;font-size:8.5px;font-weight:normal;color:#222;white-space:nowrap;transform:scaleX(0.8941);transform-origin:left center;">Bagger RH 6.5 (Hydraulik) -155</div><div style="left:336px;top:306.36999999999995px;height:12px;line-height:12px;font-size:8.5px;font-weight:normal;color:#333;white-space:nowrap;transform:scaleX(0.8941);transform-origin:left center;">41004</div><div style="left:443px;top:306.36999999999995px;height:12px;line-height:12px;font-size:8.5px;font-weight:normal;color:#111;white-space:nowrap;transform:scaleX(0.8941);transform-origin:left center;">6630: Bagger-RH 6.5 (Hydraulik)</div><div style="left:620px;top:306.36999999999995px;height:12px;line-height:12px;font-size:8.5px;font-weight:normal;color:#222;white-space:nowrap;transform:scaleX(0.8941);transform-origin:left center;">01.2019</div><div style="left:691px;top:306.36999999999995px;height:12px;line-height:12px;font-size:8.5px;font-weight:normal;color:#222;white-space:nowrap;transform:scaleX(0.8941);transform-origin:left center;">D-OK-11-123C</div><div style="left:797px;top:306.36999999999995px;height:12px;line-height:12px;font-size:8.5px;font-weight:normal;color:#111;white-space:nowrap;transform:scaleX(0.8941);transform-origin:left center;">BI-HF 2006</div><svg style="position:absolute;left:20px;top:309px" width="4" height="6" viewBox="0 0 4 6"><path d="M0.5 0.5 L3.5 3 L0.5 5.5Z" fill="#333"/></svg><svg style="position:absolute;left:596px;top:309px" width="6" height="6" viewBox="0 0 6 6"><path d="M1 1 L5 5 M5 1 L1 5" stroke="#d5223a" stroke-width="1"/></svg><svg style="position:absolute;left:607px;top:311px" width="5" height="3" viewBox="0 0 5 3"><path d="M0 0 H5 L2.5 2.6Z" fill="#555"/></svg><div style="left:439px;top:320px;width:177px;height:14px;background:#d9e3bf"></div><div style="left:794px;top:320px;width:106px;height:14px;background:linear-gradient(90deg,#d9e2ee,#dfe6f1)"></div><svg style="position:absolute;left:45px;top:322px" width="10" height="10" viewBox="0 0 10 10"><rect x="0.5" y="0.5" width="9" height="9" fill="#fff" stroke="#9a9a9a"/><path d="M2.4 5.0 L4.2 7.0 L7.8 2.8" fill="none" stroke="#505050" stroke-width="1"/></svg><div style="left:71px;top:321.23999999999995px;height:12px;line-height:12px;font-size:8.6px;font-weight:bold;color:#111;white-space:nowrap;letter-spacing:0.33px">04-1-005-00</div><div style="left:158.5px;top:321.23999999999995px;height:12px;line-height:12px;font-size:8.5px;font-weight:normal;color:#222;white-space:nowrap;transform:scaleX(0.8941);transform-origin:left center;">Bagger RH 4.5 (Hydraulik) -156</div><div style="left:336px;top:321.23999999999995px;height:12px;line-height:12px;font-size:8.5px;font-weight:normal;color:#333;white-space:nowrap;transform:scaleX(0.8941);transform-origin:left center;">41005</div><div style="left:443px;top:321.23999999999995px;height:12px;line-height:12px;font-size:8.5px;font-weight:normal;color:#111;white-space:nowrap;transform:scaleX(0.8941);transform-origin:left center;">6625: Bagger RH 4.5 (Hydraulik) -156</div><div style="left:620px;top:321.23999999999995px;height:12px;line-height:12px;font-size:8.5px;font-weight:normal;color:#222;white-space:nowrap;transform:scaleX(0.8941);transform-origin:left center;">01.2019</div><div style="left:691px;top:321.23999999999995px;height:12px;line-height:12px;font-size:8.5px;font-weight:normal;color:#222;white-space:nowrap;transform:scaleX(0.8941);transform-origin:left center;">D-OK-12-123C</div><div style="left:797px;top:321.23999999999995px;height:12px;line-height:12px;font-size:8.5px;font-weight:normal;color:#111;white-space:nowrap;transform:scaleX(0.8941);transform-origin:left center;">H-F 1915</div><div style="left:32px;top:334px;width:934px;height:1px;background:#d9d9d9"></div><div style="left:439px;top:335px;width:177px;height:14px;background:#d9e3bf"></div><div style="left:794px;top:335px;width:106px;height:14px;background:linear-gradient(90deg,#d9e2ee,#dfe6f1)"></div><svg style="position:absolute;left:45px;top:337px" width="10" height="10" viewBox="0 0 10 10"><rect x="0.5" y="0.5" width="9" height="9" fill="#fff" stroke="#9a9a9a"/><path d="M2.4 5.0 L4.2 7.0 L7.8 2.8" fill="none" stroke="#505050" stroke-width="1"/></svg><div style="left:71px;top:336.10999999999996px;height:12px;line-height:12px;font-size:8.6px;font-weight:bold;color:#111;white-space:nowrap;letter-spacing:0.33px">04-1-005-01</div><div style="left:158.5px;top:336.10999999999996px;height:12px;line-height:12px;font-size:8.5px;font-weight:normal;color:#222;white-space:nowrap;transform:scaleX(0.8941);transform-origin:left center;">Bagger RH 4.5 (Raupe) -157</div><div style="left:336px;top:336.10999999999996px;height:12px;line-height:12px;font-size:8.5px;font-weight:normal;color:#333;white-space:nowrap;transform:scaleX(0.8941);transform-origin:left center;">41005</div><div style="left:443px;top:336.10999999999996px;height:12px;line-height:12px;font-size:8.5px;font-weight:normal;color:#111;white-space:nowrap;transform:scaleX(0.8941);transform-origin:left center;">6626: Bagger RH 4.5 (Raupe) -157</div><div style="left:620px;top:336.10999999999996px;height:12px;line-height:12px;font-size:8.5px;font-weight:normal;color:#222;white-space:nowrap;transform:scaleX(0.8941);transform-origin:left center;">01.2019</div><div style="left:691px;top:336.10999999999996px;height:12px;line-height:12px;font-size:8.5px;font-weight:normal;color:#222;white-space:nowrap;transform:scaleX(0.8941);transform-origin:left center;">D-OK-12-123C</div><div style="left:797px;top:336.10999999999996px;height:12px;line-height:12px;font-size:8.5px;font-weight:normal;color:#111;white-space:nowrap;transform:scaleX(0.8941);transform-origin:left center;">BI-HF 2005</div><div style="left:32px;top:349px;width:934px;height:1px;background:#d9d9d9"></div><div style="left:439px;top:350px;width:177px;height:14px;background:#d9e3bf"></div><div style="left:794px;top:350px;width:106px;height:14px;background:linear-gradient(90deg,#d9e2ee,#dfe6f1)"></div><svg style="position:absolute;left:45px;top:352px" width="10" height="10" viewBox="0 0 10 10"><rect x="0.5" y="0.5" width="9" height="9" fill="#fff" stroke="#9a9a9a"/><path d="M2.4 5.0 L4.2 7.0 L7.8 2.8" fill="none" stroke="#505050" stroke-width="1"/></svg><div style="left:71px;top:350.97999999999996px;height:12px;line-height:12px;font-size:8.6px;font-weight:bold;color:#111;white-space:nowrap;letter-spacing:0.33px">04-1-006-01</div><div style="left:158.5px;top:350.97999999999996px;height:12px;line-height:12px;font-size:8.5px;font-weight:normal;color:#222;white-space:nowrap;transform:scaleX(0.8941);transform-origin:left center;">Bagger RH 5.5 (Hydraulik) -154</div><div style="left:336px;top:350.97999999999996px;height:12px;line-height:12px;font-size:8.5px;font-weight:normal;color:#333;white-space:nowrap;transform:scaleX(0.8941);transform-origin:left center;">41006</div><div style="left:443px;top:350.97999999999996px;height:12px;line-height:12px;font-size:8.5px;font-weight:normal;color:#111;white-space:nowrap;transform:scaleX(0.8941);transform-origin:left center;">6624: Bagger RH 5.5 (Hydraulik) -154</div><div style="left:620px;top:350.97999999999996px;height:12px;line-height:12px;font-size:8.5px;font-weight:normal;color:#222;white-space:nowrap;transform:scaleX(0.8941);transform-origin:left center;">01.2019</div><div style="left:691px;top:350.97999999999996px;height:12px;line-height:12px;font-size:8.5px;font-weight:normal;color:#222;white-space:nowrap;transform:scaleX(0.8941);transform-origin:left center;">D-OK-12-123C</div><div style="left:797px;top:350.97999999999996px;height:12px;line-height:12px;font-size:8.5px;font-weight:normal;color:#111;white-space:nowrap;transform:scaleX(0.8941);transform-origin:left center;">BI-HF 2003</div><div style="left:32px;top:364px;width:934px;height:1px;background:#d9d9d9"></div><div style="left:439px;top:365px;width:177px;height:14px;background:#d9e3bf"></div><div style="left:794px;top:365px;width:106px;height:14px;background:linear-gradient(90deg,#d9e2ee,#dfe6f1)"></div><svg style="position:absolute;left:45px;top:367px" width="10" height="10" viewBox="0 0 10 10"><rect x="0.5" y="0.5" width="9" height="9" fill="#fff" stroke="#9a9a9a"/><path d="M2.4 5.0 L4.2 7.0 L7.8 2.8" fill="none" stroke="#505050" stroke-width="1"/></svg><div style="left:71px;top:365.84999999999997px;height:12px;line-height:12px;font-size:8.6px;font-weight:bold;color:#111;white-space:nowrap;letter-spacing:0.33px">04-4-001-00</div><div style="left:158.5px;top:365.84999999999997px;height:12px;line-height:12px;font-size:8.5px;font-weight:normal;color:#222;white-space:nowrap;transform:scaleX(0.8941);transform-origin:left center;">Raupe-CAT D4 G 1,7 -155</div><div style="left:336px;top:365.84999999999997px;height:12px;line-height:12px;font-size:8.5px;font-weight:normal;color:#333;white-space:nowrap;transform:scaleX(0.8941);transform-origin:left center;">44001</div><div style="left:443px;top:365.84999999999997px;height:12px;line-height:12px;font-size:8.5px;font-weight:normal;color:#111;white-space:nowrap;transform:scaleX(0.8941);transform-origin:left center;">6709: Raupe-CAT D4 G 1,7 -155</div><div style="left:620px;top:365.84999999999997px;height:12px;line-height:12px;font-size:8.5px;font-weight:normal;color:#222;white-space:nowrap;transform:scaleX(0.8941);transform-origin:left center;">01.2019</div><div style="left:691px;top:365.84999999999997px;height:12px;line-height:12px;font-size:8.5px;font-weight:normal;color:#222;white-space:nowrap;transform:scaleX(0.8941);transform-origin:left center;"></div><div style="left:797px;top:365.84999999999997px;height:12px;line-height:12px;font-size:8.5px;font-weight:normal;color:#111;white-space:nowrap;transform:scaleX(0.8941);transform-origin:left center;">BI-HF 3001</div><div style="left:32px;top:379px;width:934px;height:1px;background:#d9d9d9"></div><div style="left:439px;top:380px;width:177px;height:14px;background:#d9e3bf"></div><div style="left:794px;top:380px;width:106px;height:14px;background:linear-gradient(90deg,#d9e2ee,#dfe6f1)"></div><svg style="position:absolute;left:45px;top:382px" width="10" height="10" viewBox="0 0 10 10"><rect x="0.5" y="0.5" width="9" height="9" fill="#fff" stroke="#9a9a9a"/><path d="M2.4 5.0 L4.2 7.0 L7.8 2.8" fill="none" stroke="#505050" stroke-width="1"/></svg><div style="left:71px;top:380.71999999999997px;height:12px;line-height:12px;font-size:8.6px;font-weight:bold;color:#111;white-space:nowrap;letter-spacing:0.33px">04-4-004-00</div><div style="left:158.5px;top:380.71999999999997px;height:12px;line-height:12px;font-size:8.5px;font-weight:normal;color:#222;white-space:nowrap;transform:scaleX(0.8941);transform-origin:left center;">Raupe-CAT D5 -156</div><div style="left:336px;top:380.71999999999997px;height:12px;line-height:12px;font-size:8.5px;font-weight:normal;color:#333;white-space:nowrap;transform:scaleX(0.8941);transform-origin:left center;">44004</div><div style="left:443px;top:380.71999999999997px;height:12px;line-height:12px;font-size:8.5px;font-weight:normal;color:#111;white-space:nowrap;transform:scaleX(0.8941);transform-origin:left center;">6710: Raupe-CAT D5 -156</div><div style="left:620px;top:380.71999999999997px;height:12px;line-height:12px;font-size:8.5px;font-weight:normal;color:#222;white-space:nowrap;transform:scaleX(0.8941);transform-origin:left center;">01.2019</div><div style="left:691px;top:380.71999999999997px;height:12px;line-height:12px;font-size:8.5px;font-weight:normal;color:#222;white-space:nowrap;transform:scaleX(0.8941);transform-origin:left center;"></div><div style="left:797px;top:380.71999999999997px;height:12px;line-height:12px;font-size:8.5px;font-weight:normal;color:#111;white-space:nowrap;transform:scaleX(0.8941);transform-origin:left center;">BI-HF 3002</div><div style="left:32px;top:394px;width:934px;height:1px;background:#d9d9d9"></div><div style="left:439px;top:395px;width:177px;height:14px;background:#d9e3bf"></div><div style="left:794px;top:395px;width:106px;height:14px;background:linear-gradient(90deg,#d9e2ee,#dfe6f1)"></div><svg style="position:absolute;left:45px;top:397px" width="10" height="10" viewBox="0 0 10 10"><rect x="0.5" y="0.5" width="9" height="9" fill="#fff" stroke="#9a9a9a"/><path d="M2.4 5.0 L4.2 7.0 L7.8 2.8" fill="none" stroke="#505050" stroke-width="1"/></svg><div style="left:71px;top:395.59px;height:12px;line-height:12px;font-size:8.6px;font-weight:bold;color:#111;white-space:nowrap;letter-spacing:0.33px">04-8-000-00</div><div style="left:158.5px;top:395.59px;height:12px;line-height:12px;font-size:8.5px;font-weight:normal;color:#222;white-space:nowrap;transform:scaleX(0.8941);transform-origin:left center;">Walze CAT PS500 -154</div><div style="left:336px;top:395.59px;height:12px;line-height:12px;font-size:8.5px;font-weight:normal;color:#333;white-space:nowrap;transform:scaleX(0.8941);transform-origin:left center;">48001</div><div style="left:443px;top:395.59px;height:12px;line-height:12px;font-size:8.5px;font-weight:normal;color:#111;white-space:nowrap;transform:scaleX(0.8941);transform-origin:left center;">6660: Walze CAT PS500 -154</div><div style="left:620px;top:395.59px;height:12px;line-height:12px;font-size:8.5px;font-weight:normal;color:#222;white-space:nowrap;transform:scaleX(0.8941);transform-origin:left center;">01.2019</div><div style="left:691px;top:395.59px;height:12px;line-height:12px;font-size:8.5px;font-weight:normal;color:#222;white-space:nowrap;transform:scaleX(0.8941);transform-origin:left center;">CAT-PS300-123-45MK</div><div style="left:797px;top:395.59px;height:12px;line-height:12px;font-size:8.5px;font-weight:normal;color:#111;white-space:nowrap;transform:scaleX(0.8941);transform-origin:left center;">BI-HF 4002</div><div style="left:32px;top:409px;width:934px;height:1px;background:#d9d9d9"></div><div style="left:439px;top:410px;width:177px;height:14px;background:#d9e3bf"></div><div style="left:794px;top:410px;width:106px;height:14px;background:linear-gradient(90deg,#d9e2ee,#dfe6f1)"></div><svg style="position:absolute;left:45px;top:411px" width="10" height="10" viewBox="0 0 10 10"><rect x="0.5" y="0.5" width="9" height="9" fill="#fff" stroke="#9a9a9a"/><path d="M2.4 5.0 L4.2 7.0 L7.8 2.8" fill="none" stroke="#505050" stroke-width="1"/></svg><div style="left:71px;top:410.46px;height:12px;line-height:12px;font-size:8.6px;font-weight:bold;color:#111;white-space:nowrap;letter-spacing:0.33px">04-8-001-00</div><div style="left:158.5px;top:410.46px;height:12px;line-height:12px;font-size:8.5px;font-weight:normal;color:#222;white-space:nowrap;transform:scaleX(0.8941);transform-origin:left center;">Walze CAT PS300 -102</div><div style="left:336px;top:410.46px;height:12px;line-height:12px;font-size:8.5px;font-weight:normal;color:#333;white-space:nowrap;transform:scaleX(0.8941);transform-origin:left center;">48001</div><div style="left:443px;top:410.46px;height:12px;line-height:12px;font-size:8.5px;font-weight:normal;color:#111;white-space:nowrap;transform:scaleX(0.8941);transform-origin:left center;">6655: Walze-CAT PS300</div><div style="left:620px;top:410.46px;height:12px;line-height:12px;font-size:8.5px;font-weight:normal;color:#222;white-space:nowrap;transform:scaleX(0.8941);transform-origin:left center;">01.2019</div><div style="left:691px;top:410.46px;height:12px;line-height:12px;font-size:8.5px;font-weight:normal;color:#222;white-space:nowrap;transform:scaleX(0.8941);transform-origin:left center;">CAT-PS300-123-45MK</div><div style="left:797px;top:410.46px;height:12px;line-height:12px;font-size:8.5px;font-weight:normal;color:#111;white-space:nowrap;transform:scaleX(0.8941);transform-origin:left center;">BI-HF 4001</div><div style="left:32px;top:424px;width:934px;height:1px;background:#d9d9d9"></div><div style="left:439px;top:425px;width:177px;height:13px;background:#d9e3bf"></div><div style="left:794px;top:425px;width:106px;height:13px;background:linear-gradient(90deg,#d9e2ee,#dfe6f1)"></div><svg style="position:absolute;left:45px;top:426px" width="10" height="10" viewBox="0 0 10 10"><rect x="0.5" y="0.5" width="9" height="9" fill="#fff" stroke="#9a9a9a"/><path d="M2.4 5.0 L4.2 7.0 L7.8 2.8" fill="none" stroke="#505050" stroke-width="1"/></svg><div style="left:71px;top:425.33px;height:12px;line-height:12px;font-size:8.6px;font-weight:bold;color:#111;white-space:nowrap;letter-spacing:0.33px">05-4-001-00</div><div style="left:158.5px;top:425.33px;height:12px;line-height:12px;font-size:8.5px;font-weight:normal;color:#222;white-space:nowrap;transform:scaleX(0.8941);transform-origin:left center;">Radlader L6 Pflasterkolonne -102</div><div style="left:336px;top:425.33px;height:12px;line-height:12px;font-size:8.5px;font-weight:normal;color:#333;white-space:nowrap;transform:scaleX(0.8941);transform-origin:left center;">54001</div><div style="left:443px;top:425.33px;height:12px;line-height:12px;font-size:8.5px;font-weight:normal;color:#111;white-space:nowrap;transform:scaleX(0.8941);transform-origin:left center;">6640: Radlader-L6</div><div style="left:620px;top:425.33px;height:12px;line-height:12px;font-size:8.5px;font-weight:normal;color:#222;white-space:nowrap;transform:scaleX(0.8941);transform-origin:left center;">01.2019</div><div style="left:691px;top:425.33px;height:12px;line-height:12px;font-size:8.5px;font-weight:normal;color:#222;white-space:nowrap;transform:scaleX(0.8941);transform-origin:left center;">CAT-B642-123-45MK</div><div style="left:797px;top:425.33px;height:12px;line-height:12px;font-size:8.5px;font-weight:normal;color:#111;white-space:nowrap;transform:scaleX(0.8941);transform-origin:left center;">BI-HF 1002</div><div style="left:32px;top:438px;width:934px;height:1px;background:#d9d9d9"></div><div style="left:439px;top:439px;width:177px;height:14px;background:#d9e3bf"></div><svg style="position:absolute;left:45px;top:441px" width="10" height="10" viewBox="0 0 10 10"><rect x="0.5" y="0.5" width="9" height="9" fill="#fff" stroke="#9a9a9a"/><path d="M2.4 5.0 L4.2 7.0 L7.8 2.8" fill="none" stroke="#505050" stroke-width="1"/></svg><div style="left:71px;top:440.2px;height:12px;line-height:12px;font-size:8.6px;font-weight:bold;color:#111;white-space:nowrap;letter-spacing:0.33px">05-7-001-00</div><div style="left:158.5px;top:440.2px;height:12px;line-height:12px;font-size:8.5px;font-weight:normal;color:#222;white-space:nowrap;transform:scaleX(0.8941);transform-origin:left center;">Fräse Wirtgen W35-153</div><div style="left:336px;top:440.2px;height:12px;line-height:12px;font-size:8.5px;font-weight:normal;color:#333;white-space:nowrap;transform:scaleX(0.8941);transform-origin:left center;">57001</div><div style="left:443px;top:440.2px;height:12px;line-height:12px;font-size:8.5px;font-weight:normal;color:#111;white-space:nowrap;transform:scaleX(0.8941);transform-origin:left center;">6811: Fräse-Wirtgen W35 Klein</div><div style="left:620px;top:440.2px;height:12px;line-height:12px;font-size:8.5px;font-weight:normal;color:#222;white-space:nowrap;transform:scaleX(0.8941);transform-origin:left center;">01.2019</div><div style="left:691px;top:440.2px;height:12px;line-height:12px;font-size:8.5px;font-weight:normal;color:#222;white-space:nowrap;transform:scaleX(0.8941);transform-origin:left center;">SF310-123-45MK</div><div style="left:797px;top:440.2px;height:12px;line-height:12px;font-size:8.5px;font-weight:normal;color:#111;white-space:nowrap;transform:scaleX(0.8941);transform-origin:left center;"></div><div style="left:32px;top:453px;width:934px;height:1px;background:#d9d9d9"></div><div style="left:439px;top:454px;width:177px;height:14px;background:#d9e3bf"></div><svg style="position:absolute;left:45px;top:456px" width="10" height="10" viewBox="0 0 10 10"><rect x="0.5" y="0.5" width="9" height="9" fill="#fff" stroke="#9a9a9a"/><path d="M2.4 5.0 L4.2 7.0 L7.8 2.8" fill="none" stroke="#505050" stroke-width="1"/></svg><div style="left:71px;top:455.07px;height:12px;line-height:12px;font-size:8.6px;font-weight:bold;color:#111;white-space:nowrap;letter-spacing:0.33px">05-7-002-03</div><div style="left:158.5px;top:455.07px;height:12px;line-height:12px;font-size:8.5px;font-weight:normal;color:#222;white-space:nowrap;transform:scaleX(0.8941);transform-origin:left center;">Fräse Wirtgen W150 -155</div><div style="left:336px;top:455.07px;height:12px;line-height:12px;font-size:8.5px;font-weight:normal;color:#333;white-space:nowrap;transform:scaleX(0.8941);transform-origin:left center;">57001</div><div style="left:443px;top:455.07px;height:12px;line-height:12px;font-size:8.5px;font-weight:normal;color:#111;white-space:nowrap;transform:scaleX(0.8941);transform-origin:left center;">6810: Fräse Wirtgen W150 -155</div><div style="left:620px;top:455.07px;height:12px;line-height:12px;font-size:8.5px;font-weight:normal;color:#222;white-space:nowrap;transform:scaleX(0.8941);transform-origin:left center;">01.2019</div><div style="left:691px;top:455.07px;height:12px;line-height:12px;font-size:8.5px;font-weight:normal;color:#222;white-space:nowrap;transform:scaleX(0.8941);transform-origin:left center;">SF310-123-45MK</div><div style="left:797px;top:455.07px;height:12px;line-height:12px;font-size:8.5px;font-weight:normal;color:#111;white-space:nowrap;transform:scaleX(0.8941);transform-origin:left center;"></div><div style="left:32px;top:468px;width:934px;height:1px;background:#d9d9d9"></div><div style="left:439px;top:469px;width:177px;height:14px;background:#d9e3bf"></div><div style="left:794px;top:469px;width:106px;height:14px;background:linear-gradient(90deg,#d9e2ee,#dfe6f1)"></div><svg style="position:absolute;left:45px;top:471px" width="10" height="10" viewBox="0 0 10 10"><rect x="0.5" y="0.5" width="9" height="9" fill="#fff" stroke="#9a9a9a"/><path d="M2.4 5.0 L4.2 7.0 L7.8 2.8" fill="none" stroke="#505050" stroke-width="1"/></svg><div style="left:71px;top:469.94px;height:12px;line-height:12px;font-size:8.6px;font-weight:bold;color:#111;white-space:nowrap;letter-spacing:0.33px">06-1-001-00</div><div style="left:158.5px;top:469.94px;height:12px;line-height:12px;font-size:8.5px;font-weight:normal;color:#222;white-space:nowrap;transform:scaleX(0.8941);transform-origin:left center;">LKW - Allrad Scania</div><div style="left:336px;top:469.94px;height:12px;line-height:12px;font-size:8.5px;font-weight:normal;color:#333;white-space:nowrap;transform:scaleX(0.8941);transform-origin:left center;">61001</div><div style="left:443px;top:469.94px;height:12px;line-height:12px;font-size:8.5px;font-weight:normal;color:#111;white-space:nowrap;transform:scaleX(0.8941);transform-origin:left center;">6645: LKW, Allrad Scania</div><div style="left:620px;top:469.94px;height:12px;line-height:12px;font-size:8.5px;font-weight:normal;color:#222;white-space:nowrap;transform:scaleX(0.8941);transform-origin:left center;">01.2019</div><div style="left:691px;top:469.94px;height:12px;line-height:12px;font-size:8.5px;font-weight:normal;color:#222;white-space:nowrap;transform:scaleX(0.8941);transform-origin:left center;">SC 01-111-2580</div><div style="left:797px;top:469.94px;height:12px;line-height:12px;font-size:8.5px;font-weight:normal;color:#111;white-space:nowrap;transform:scaleX(0.8941);transform-origin:left center;">BI-HF 6001</div><div style="left:32px;top:200px;width:1px;height:281px;background:#d0d0d0"></div><div style="left:67px;top:200px;width:1px;height:281px;background:#d0d0d0"></div><div style="left:155px;top:200px;width:1px;height:281px;background:#d0d0d0"></div><div style="left:333px;top:200px;width:1px;height:281px;background:#d0d0d0"></div><div style="left:439px;top:200px;width:1px;height:281px;background:#d0d0d0"></div><div style="left:616px;top:200px;width:1px;height:281px;background:#d0d0d0"></div><div style="left:687px;top:200px;width:1px;height:281px;background:#d0d0d0"></div><div style="left:794px;top:200px;width:1px;height:281px;background:#d0d0d0"></div><div style="left:900px;top:200px;width:1px;height:281px;background:#d0d0d0"></div><div style="left:16px;top:480px;width:961px;height:1px;background:#a0a0a0"></div><div style="left:16px;top:481px;width:950px;height:10px;background:#f0f0f0"></div><div style="left:18px;top:481px;width:10px;height:10px;background:#fff;border:1px solid #c6c6c6;box-sizing:border-box"></div><svg style="position:absolute;left:21px;top:483px" width="4" height="6" viewBox="0 0 4 6"><path d="M3.5 0.5 L0.5 3 L3.5 5.5Z" fill="#333"/></svg><div style="left:28px;top:481px;width:725px;height:10px;background:#fff;border:1px solid #c6c6c6;box-sizing:border-box"></div><div style="left:954px;top:481px;width:11px;height:10px;background:#fff;border:1px solid #c6c6c6;box-sizing:border-box"></div><svg style="position:absolute;left:958px;top:483px" width="4" height="6" viewBox="0 0 4 6"><path d="M0.5 0.5 L3.5 3 L0.5 5.5Z" fill="#333"/></svg><div style="left:966px;top:200px;width:10px;height:281px;background:#f0f0f0"></div><div style="left:966px;top:200px;width:10px;height:13px;background:#fff;border:1px solid #c6c6c6;box-sizing:border-box"></div><svg style="position:absolute;left:968px;top:204px" width="6" height="4" viewBox="0 0 6 4"><path d="M0.5 3.5 L3 0.5 L5.5 3.5Z" fill="#333"/></svg><div style="left:966px;top:213px;width:10px;height:144px;background:#fff;border:1px solid #c6c6c6;box-sizing:border-box"></div><div style="left:968px;top:269px;width:6px;height:1px;background:#2a8a4a"></div><div style="left:966px;top:467px;width:10px;height:13px;background:#fff;border:1px solid #c6c6c6;box-sizing:border-box"></div><svg style="position:absolute;left:968px;top:472px" width="6" height="4" viewBox="0 0 6 4"><path d="M0.5 0.5 L3 3.5 L5.5 0.5Z" fill="#333"/></svg><div style="left:16px;top:491px;width:960px;height:15px;background:#f0f0f0"></div><div style="left:16px;top:492px;width:106px;height:13px;background:#fff;border:1px solid #c8c8c8;border-bottom:none;box-sizing:border-box"></div><svg style="position:absolute;left:18px;top:496px" width="8" height="6" viewBox="0 0 8 6"><path d="M0.5 0.5 V5.5" stroke="#666"/><path d="M4 0.5 L1.5 3 L4 5.5Z M7 0.5 L4.5 3 L7 5.5Z" fill="#666"/></svg><svg style="position:absolute;left:30px;top:496px" width="8" height="6" viewBox="0 0 8 6"><path d="M3 0.5 L0.5 3 L3 5.5Z M6 0.5 L3.5 3 L6 5.5Z" fill="#666"/></svg><svg style="position:absolute;left:42px;top:496px" width="8" height="6" viewBox="0 0 8 6"><path d="M3 0.5 L0.5 3 L3 5.5Z" fill="#666"/></svg><svg style="position:absolute;left:94px;top:496px" width="8" height="6" viewBox="0 0 8 6"><path d="M0.5 0.5 L3 3 L0.5 5.5Z" fill="#666"/></svg><svg style="position:absolute;left:103px;top:496px" width="8" height="6" viewBox="0 0 8 6"><path d="M0.5 0.5 L3 3 L0.5 5.5Z M3.5 0.5 L6 3 L3.5 5.5Z" fill="#666"/></svg><svg style="position:absolute;left:113px;top:496px" width="8" height="6" viewBox="0 0 8 6"><path d="M0.5 0.5 L3 3 L0.5 5.5Z M3.5 0.5 L6 3 L3.5 5.5Z" fill="#666"/><path d="M7 0.5 V5.5" stroke="#666"/></svg><div style="left:54px;top:492.5px;height:12px;line-height:12px;font-size:8.5px;font-weight:normal;color:#333;white-space:nowrap;transform:scaleX(0.8941);transform-origin:left center;">7 von 29</div><div style="left:855px;width:120px;text-align:right;top:491.5px;height:12px;line-height:12px;font-size:8.5px;font-weight:normal;color:#333;white-space:nowrap;transform:scaleX(0.9176);transform-origin:right center;">1 Zeile(n) selektiert</div><div style="left:16px;top:506px;width:960px;height:17px;background:#dadada"></div><div style="left:16px;top:522px;width:960px;height:1px;background:#b9b9b9"></div><div style="left:22px;top:508.5px;height:12px;line-height:12px;font-size:8.5px;font-weight:bold;color:#222;white-space:nowrap;transform:scaleX(0.9882);transform-origin:left center;">Verrechnungssätze Typ 1</div><svg style="position:absolute;left:963px;top:510px" width="7" height="9" viewBox="0 0 7 9"><path d="M1 1 H6 M2 1 V5 M5 1 V5 M0.5 5 H6.5 M3.5 5 V8.5" stroke="#777" fill="none" stroke-width="0.9"/></svg><div style="left:18px;top:523px;width:957px;height:222px;background:#f0f0f0;border:1px solid #c8c8c8;border-top:none;box-sizing:border-box"></div><div style="left:27px;top:533px;width:278px;height:14px;background:#fff;border:1px solid #b8b8b8;box-sizing:border-box"></div><div style="left:30px;top:534.0px;height:12px;line-height:12px;font-size:8.5px;font-weight:normal;color:#6a6a6a;white-space:nowrap;transform:scaleX(0.9176);transform-origin:left center;-webkit-text-stroke:0.05px currentColor">Bitte Suchtext hier eingeben...</div><div style="left:19px;top:555px;width:956px;height:1px;background:#b0b0b0"></div><div style="left:19px;top:556px;width:956px;height:1px;background:#fafafa"></div><div style="left:21px;top:562.0px;height:12px;line-height:12px;font-size:8.5px;font-weight:normal;color:#555;white-space:nowrap;transform:scaleX(0.8882);transform-origin:left center;-webkit-text-stroke:0.05px currentColor">Ziehen Sie eine Spaltenüberschrift in diesen Bereich, um nach dieser zu gruppieren</div><div style="left:19px;top:579px;width:956px;height:134px;background:#fff"></div><div style="left:19px;top:579px;width:956px;height:16px;background:#f0f0f0"></div><div style="left:19px;top:579px;width:956px;height:1px;background:#b0b0b0"></div><div style="left:19px;top:595px;width:956px;height:1px;background:#a8a8a8"></div><div style="left:34px;top:580px;width:1px;height:15px;background:#c9c9c9"></div><div style="left:175px;top:580px;width:1px;height:15px;background:#c9c9c9"></div><div style="left:316px;top:580px;width:1px;height:15px;background:#c9c9c9"></div><div style="left:387px;top:580px;width:1px;height:15px;background:#c9c9c9"></div><div style="left:458px;top:580px;width:1px;height:15px;background:#c9c9c9"></div><div style="left:530px;top:580px;width:1px;height:15px;background:#c9c9c9"></div><div style="left:601px;top:580px;width:1px;height:15px;background:#c9c9c9"></div><div style="left:38px;top:581.5px;height:12px;line-height:12px;font-size:8.5px;font-weight:bold;color:#555a60;white-space:nowrap;">Verrechnungssatztyp</div><div style="left:179px;top:581.5px;height:12px;line-height:12px;font-size:8.5px;font-weight:bold;color:#555a60;white-space:nowrap;">Sachkontengruppe</div><div style="left:315px;width:70px;text-align:right;top:581.5px;height:12px;line-height:12px;font-size:8.5px;font-weight:bold;color:#555a60;white-space:nowrap;">VS pro Tag</div><div style="left:386px;width:70px;text-align:right;top:581.5px;height:12px;line-height:12px;font-size:8.5px;font-weight:bold;color:#555a60;white-space:nowrap;">VS pro Stunde</div><div style="left:463px;top:581.5px;height:12px;line-height:12px;font-size:8.5px;font-weight:bold;color:#555a60;white-space:nowrap;">VS pro Kilome...</div><div style="left:530.5px;width:70px;text-align:center;top:581.5px;height:12px;line-height:12px;font-size:8.5px;font-weight:bold;color:#555a60;white-space:nowrap;">Festbetrag</div><svg style="position:absolute;left:22px;top:599px" width="8" height="8" viewBox="0 0 8 8"><g stroke="#f08a24" stroke-width="1.5" stroke-linecap="round"><path d="M4 1 V7"/><path d="M1.4 2.5 L6.6 5.5"/><path d="M6.6 2.5 L1.4 5.5"/></g></svg><div style="left:187.0px;width:260px;text-align:center;top:597.0px;height:12px;line-height:12px;font-size:8.5px;font-weight:normal;color:#666;white-space:nowrap;transform:scaleX(0.8824);transform-origin:center center;">Hier klicken um eine neue Zeile hinzuzufügen</div><div style="left:19px;top:610px;width:16px;height:1px;background:#e6e6e6"></div><div style="left:34px;top:610px;width:567px;height:15px;background:#d3d3d3"></div><svg style="position:absolute;left:26px;top:614px" width="4" height="6" viewBox="0 0 4 6"><path d="M0.5 0.5 L3.5 3 L0.5 5.5Z" fill="#333"/></svg><svg style="position:absolute;left:166px;top:616px" width="5" height="3" viewBox="0 0 5 3"><path d="M0 0 H5 L2.5 2.6Z" fill="#555"/></svg><div style="left:37.5px;top:611.5px;height:12px;line-height:12px;font-size:8.5px;font-weight:normal;color:#222;white-space:nowrap;transform:scaleX(0.8941);transform-origin:left center;">1: BGL</div><div style="left:178.5px;top:611.5px;height:12px;line-height:12px;font-size:8.5px;font-weight:normal;color:#222;white-space:nowrap;transform:scaleX(0.8941);transform-origin:left center;">10: Bagger - Gerätekosten</div><div style="left:325px;width:60px;text-align:right;top:611.5px;height:12px;line-height:12px;font-size:8.5px;font-weight:normal;color:#222;white-space:nowrap;transform:scaleX(0.8941);transform-origin:right center;">402,50</div><div style="left:396px;width:60px;text-align:right;top:611.5px;height:12px;line-height:12px;font-size:8.5px;font-weight:normal;color:#222;white-space:nowrap;transform:scaleX(0.8941);transform-origin:right center;">50,31</div><svg style="position:absolute;left:561px;top:612px" width="10" height="10" viewBox="0 0 10 10"><rect x="0.5" y="0.5" width="9" height="9" fill="#fff" stroke="#9a9a9a"/></svg><div style="left:34px;top:624px;width:567px;height:1px;background:#d9d9d9"></div><div style="left:37.5px;top:626.5px;height:12px;line-height:12px;font-size:8.5px;font-weight:normal;color:#222;white-space:nowrap;transform:scaleX(0.8941);transform-origin:left center;">3: Kalkulation</div><div style="left:178.5px;top:626.5px;height:12px;line-height:12px;font-size:8.5px;font-weight:normal;color:#222;white-space:nowrap;transform:scaleX(0.8941);transform-origin:left center;">10: Bagger - Gerätekosten</div><div style="left:325px;width:60px;text-align:right;top:626.5px;height:12px;line-height:12px;font-size:8.5px;font-weight:normal;color:#222;white-space:nowrap;transform:scaleX(0.8941);transform-origin:right center;">761,70</div><div style="left:396px;width:60px;text-align:right;top:626.5px;height:12px;line-height:12px;font-size:8.5px;font-weight:normal;color:#222;white-space:nowrap;transform:scaleX(0.8941);transform-origin:right center;">95,21</div><svg style="position:absolute;left:561px;top:628px" width="10" height="10" viewBox="0 0 10 10"><rect x="0.5" y="0.5" width="9" height="9" fill="#fff" stroke="#9a9a9a"/></svg><div style="left:34px;top:639px;width:567px;height:1px;background:#d9d9d9"></div><div style="left:37.5px;top:641.5px;height:12px;line-height:12px;font-size:8.5px;font-weight:normal;color:#222;white-space:nowrap;transform:scaleX(0.8941);transform-origin:left center;">4: Intern (1)</div><div style="left:178.5px;top:641.5px;height:12px;line-height:12px;font-size:8.5px;font-weight:normal;color:#222;white-space:nowrap;transform:scaleX(0.8941);transform-origin:left center;">10: Bagger - Gerätekosten</div><div style="left:325px;width:60px;text-align:right;top:641.5px;height:12px;line-height:12px;font-size:8.5px;font-weight:normal;color:#222;white-space:nowrap;transform:scaleX(0.8941);transform-origin:right center;">376,82</div><div style="left:396px;width:60px;text-align:right;top:641.5px;height:12px;line-height:12px;font-size:8.5px;font-weight:normal;color:#222;white-space:nowrap;transform:scaleX(0.8941);transform-origin:right center;">47,10</div><svg style="position:absolute;left:561px;top:642px" width="10" height="10" viewBox="0 0 10 10"><rect x="0.5" y="0.5" width="9" height="9" fill="#fff" stroke="#9a9a9a"/></svg><div style="left:34px;top:654px;width:567px;height:1px;background:#d9d9d9"></div><div style="left:37.5px;top:656.5px;height:12px;line-height:12px;font-size:8.5px;font-weight:normal;color:#222;white-space:nowrap;transform:scaleX(0.8941);transform-origin:left center;">9: Festpreis</div><div style="left:178.5px;top:656.5px;height:12px;line-height:12px;font-size:8.5px;font-weight:normal;color:#222;white-space:nowrap;transform:scaleX(0.8941);transform-origin:left center;">10: Bagger - Gerätekosten</div><div style="left:325px;width:60px;text-align:right;top:656.5px;height:12px;line-height:12px;font-size:8.5px;font-weight:normal;color:#222;white-space:nowrap;transform:scaleX(0.8941);transform-origin:right center;">440,00</div><div style="left:396px;width:60px;text-align:right;top:656.5px;height:12px;line-height:12px;font-size:8.5px;font-weight:normal;color:#222;white-space:nowrap;transform:scaleX(0.8941);transform-origin:right center;">55,00</div><svg style="position:absolute;left:561px;top:658px" width="10" height="10" viewBox="0 0 10 10"><rect x="0.5" y="0.5" width="9" height="9" fill="#fff" stroke="#9a9a9a"/></svg><div style="left:34px;top:669px;width:567px;height:1px;background:#d9d9d9"></div><div style="left:34px;top:610px;width:1px;height:60px;background:#d0d0d0"></div><div style="left:175px;top:610px;width:1px;height:60px;background:#d0d0d0"></div><div style="left:316px;top:610px;width:1px;height:60px;background:#d0d0d0"></div><div style="left:387px;top:610px;width:1px;height:60px;background:#d0d0d0"></div><div style="left:458px;top:610px;width:1px;height:60px;background:#d0d0d0"></div><div style="left:530px;top:610px;width:1px;height:60px;background:#d0d0d0"></div><div style="left:601px;top:610px;width:1px;height:60px;background:#d0d0d0"></div><div style="left:19px;top:712px;width:956px;height:15px;background:#f0f0f0"></div><div style="left:19px;top:712px;width:956px;height:1px;background:#c8c8c8"></div><div style="left:18px;top:713px;width:97px;height:13px;background:#fff;border:1px solid #c8c8c8;border-top:none;box-sizing:border-box"></div><svg style="position:absolute;left:20px;top:716px" width="8" height="6" viewBox="0 0 8 6"><path d="M0.5 0.5 V5.5" stroke="#888"/><path d="M4 0.5 L1.5 3 L4 5.5Z M7 0.5 L4.5 3 L7 5.5Z" fill="#888"/></svg><svg style="position:absolute;left:31px;top:716px" width="8" height="6" viewBox="0 0 8 6"><path d="M3 0.5 L0.5 3 L3 5.5Z M6 0.5 L3.5 3 L6 5.5Z" fill="#888"/></svg><svg style="position:absolute;left:41px;top:716px" width="8" height="6" viewBox="0 0 8 6"><path d="M3 0.5 L0.5 3 L3 5.5Z" fill="#888"/></svg><svg style="position:absolute;left:88px;top:716px" width="8" height="6" viewBox="0 0 8 6"><path d="M0.5 0.5 L3 3 L0.5 5.5Z" fill="#888"/></svg><svg style="position:absolute;left:96px;top:716px" width="8" height="6" viewBox="0 0 8 6"><path d="M0.5 0.5 L3 3 L0.5 5.5Z M3.5 0.5 L6 3 L3.5 5.5Z" fill="#888"/></svg><svg style="position:absolute;left:104px;top:716px" width="8" height="6" viewBox="0 0 8 6"><path d="M0.5 0.5 L3 3 L0.5 5.5Z M3.5 0.5 L6 3 L3.5 5.5Z" fill="#888"/><path d="M7 0.5 V5.5" stroke="#888"/></svg><div style="left:54px;top:713.5px;height:12px;line-height:12px;font-size:8.5px;font-weight:normal;color:#222;white-space:nowrap;transform:scaleX(0.9529);transform-origin:left center;">1 von 4</div><div style="left:854px;width:120px;text-align:right;top:713.0px;height:12px;line-height:12px;font-size:8.5px;font-weight:normal;color:#333;white-space:nowrap;transform:scaleX(0.9176);transform-origin:right center;">1 Zeile(n) selektiert</div><div style="left:18px;top:727px;width:957px;height:18px;background:#dcdcdc"></div><div style="left:20.5px;top:727px;width:78.5px;height:15px;background:#ececec"></div><div style="left:-9.75px;width:140px;text-align:center;top:728.5px;height:12px;line-height:12px;font-size:8.5px;font-weight:normal;color:#222;white-space:nowrap;transform:scaleX(0.9059);transform-origin:center center;">Geräteführerscheine</div><div style="left:101.5px;top:727px;width:63.0px;height:15px;background:#ececec"></div><div style="left:63.5px;width:140px;text-align:center;top:728.5px;height:12px;line-height:12px;font-size:8.5px;font-weight:normal;color:#222;white-space:nowrap;transform:scaleX(0.9059);transform-origin:center center;">Gerätestückliste</div><div style="left:167px;top:727px;width:73px;height:15px;background:#ececec"></div><div style="left:134.0px;width:140px;text-align:center;top:728.5px;height:12px;line-height:12px;font-size:8.5px;font-weight:normal;color:#222;white-space:nowrap;transform:scaleX(0.9059);transform-origin:center center;">Gerätezusatzdaten</div><div style="left:243px;top:727px;width:47px;height:15px;background:#ececec"></div><div style="left:197.0px;width:140px;text-align:center;top:728.5px;height:12px;line-height:12px;font-size:8.5px;font-weight:normal;color:#222;white-space:nowrap;transform:scaleX(0.9059);transform-origin:center center;">Information</div><div style="left:293px;top:727px;width:47px;height:15px;background:#ececec"></div><div style="left:247.0px;width:140px;text-align:center;top:728.5px;height:12px;line-height:12px;font-size:8.5px;font-weight:normal;color:#222;white-space:nowrap;transform:scaleX(0.9059);transform-origin:center center;">Lebenslauf</div><div style="left:341px;top:727px;width:53px;height:15px;background:#ececec"></div><div style="left:298.0px;width:140px;text-align:center;top:728.5px;height:12px;line-height:12px;font-size:8.5px;font-weight:normal;color:#222;white-space:nowrap;transform:scaleX(0.9059);transform-origin:center center;">Transponder</div><div style="left:395px;top:727px;width:99px;height:15px;background:#ececec"></div><div style="left:375.0px;width:140px;text-align:center;top:728.5px;height:12px;line-height:12px;font-size:8.5px;font-weight:normal;color:#222;white-space:nowrap;transform:scaleX(0.9059);transform-origin:center center;">Treibstoffe / Zählerstände</div><div style="left:495px;top:727px;width:95px;height:15px;background:#f7f7f7"></div><div style="left:473.0px;width:140px;text-align:center;top:728.5px;height:12px;line-height:12px;font-size:8.5px;font-weight:normal;color:#222;white-space:nowrap;transform:scaleX(0.9059);transform-origin:center center;">Verrechnungssätze Typ 1</div><div style="left:591px;top:727px;width:97px;height:15px;background:#ececec"></div><div style="left:570.0px;width:140px;text-align:center;top:728.5px;height:12px;line-height:12px;font-size:8.5px;font-weight:normal;color:#222;white-space:nowrap;transform:scaleX(0.9059);transform-origin:center center;">Verrechnungssätze Typ 2</div><div style="left:690px;top:727px;width:54px;height:15px;background:#ececec"></div><div style="left:647.5px;width:140px;text-align:center;top:728.5px;height:12px;line-height:12px;font-size:8.5px;font-weight:normal;color:#222;white-space:nowrap;transform:scaleX(0.9059);transform-origin:center center;">Zusatzgeräte</div><div style="left:980px;top:129px;width:380px;height:617px;background:#f0f0f0"></div><div style="left:980px;top:129px;width:1px;height:617px;background:#c8c8c8"></div><div style="left:981px;top:129px;width:379px;height:18px;background:#dadada"></div><div style="left:981px;top:146px;width:368px;height:1px;background:#c4c4c4"></div><div style="left:985px;top:132.0px;height:12px;line-height:12px;font-size:8.5px;font-weight:bold;color:#222;white-space:nowrap;transform:scaleX(0.9765);transform-origin:left center;">Details</div><svg style="position:absolute;left:1348px;top:134px" width="7" height="9" viewBox="0 0 7 9"><path d="M1 1 H6 M2 1 V5 M5 1 V5 M0.5 5 H6.5 M3.5 5 V8.5" stroke="#777" fill="none" stroke-width="0.9"/></svg><div style="left:1349px;top:147px;width:11px;height:599px;background:#f0f0f0"></div><div style="left:1349px;top:148px;width:10px;height:12px;background:#fff;border:1px solid #c6c6c6;box-sizing:border-box"></div><svg style="position:absolute;left:1351px;top:152px" width="6" height="4" viewBox="0 0 6 4"><path d="M0.5 3.5 L3 0.5 L5.5 3.5Z" fill="#333"/></svg><div style="left:1349px;top:161px;width:10px;height:556px;background:#fff;border:1px solid #c6c6c6;box-sizing:border-box"></div><div style="left:1349px;top:732px;width:10px;height:12px;background:#fff;border:1px solid #c6c6c6;box-sizing:border-box"></div><svg style="position:absolute;left:1351px;top:736px" width="6" height="4" viewBox="0 0 6 4"><path d="M0.5 0.5 L3 3.5 L5.5 0.5Z" fill="#333"/></svg><div style="left:988.5px;top:156.0px;height:12px;line-height:12px;font-size:8.5px;font-weight:normal;color:#333;white-space:nowrap;transform:scaleX(0.9000);transform-origin:left center;">Inventarnummer:</div><div style="left:1057px;top:155px;width:131px;height:14px;background:#fff;border:1px solid #b4b4b4;box-sizing:border-box"></div><div style="left:1060px;top:156.0px;height:12px;line-height:12px;font-size:8.5px;font-weight:normal;color:#222;white-space:nowrap;transform:scaleX(0.9176);transform-origin:left center;">04-1-004-00</div><div style="left:988.5px;top:173.5px;height:12px;line-height:12px;font-size:8.5px;font-weight:normal;color:#333;white-space:nowrap;transform:scaleX(0.9000);transform-origin:left center;">Interne Nummer:</div><div style="left:1057px;top:172px;width:131px;height:14px;background:#fff;border:1px solid #b4b4b4;box-sizing:border-box"></div><div style="left:1060px;top:173.0px;height:12px;line-height:12px;font-size:8.5px;font-weight:normal;color:#222;white-space:nowrap;transform:scaleX(0.9176);transform-origin:left center;">41004</div><div style="left:988.5px;top:190.5px;height:12px;line-height:12px;font-size:8.5px;font-weight:normal;color:#333;white-space:nowrap;transform:scaleX(0.9000);transform-origin:left center;">Suchbegriff:</div><div style="left:1057px;top:189px;width:283px;height:14px;background:#fff;border:1px solid #b4b4b4;box-sizing:border-box"></div><div style="left:1060px;top:190.0px;height:12px;line-height:12px;font-size:8.5px;font-weight:normal;color:#222;white-space:nowrap;transform:scaleX(0.9176);transform-origin:left center;">Bagger RH 6.5 (Hydraulik) -155</div><div style="left:988.5px;top:207.5px;height:12px;line-height:12px;font-size:8.5px;font-weight:normal;color:#333;white-space:nowrap;transform:scaleX(0.9000);transform-origin:left center;">Kostenstelle:</div><div style="left:1057px;top:206px;width:283px;height:14px;background:#fff;border:1px solid #b4b4b4;box-sizing:border-box"></div><div style="left:1060px;top:207.0px;height:12px;line-height:12px;font-size:8.5px;font-weight:normal;color:#222;white-space:nowrap;transform:scaleX(0.9176);transform-origin:left center;">6630: Bagger-RH 6.5 (Hydraulik)</div><svg style="position:absolute;left:1331px;top:212px" width="5" height="3" viewBox="0 0 5 3"><path d="M0 0 H5 L2.5 2.6Z" fill="#555"/></svg><svg style="position:absolute;left:1320px;top:210px" width="6" height="6" viewBox="0 0 6 6"><path d="M1 1 L5 5 M5 1 L1 5" stroke="#d5223a" stroke-width="1.1"/></svg><div style="left:1198.5px;top:156.0px;height:12px;line-height:12px;font-size:8.5px;font-weight:normal;color:#333;white-space:nowrap;transform:scaleX(0.9000);transform-origin:left center;">Aktiv:</div><svg style="position:absolute;left:1268px;top:157px" width="10" height="10" viewBox="0 0 10 10"><rect x="0.5" y="0.5" width="9" height="9" fill="#fff" stroke="#9a9a9a"/><path d="M2.4 5.0 L4.2 7.0 L7.8 2.8" fill="none" stroke="#505050" stroke-width="1"/></svg><div style="left:1198.5px;top:173.5px;height:12px;line-height:12px;font-size:8.5px;font-weight:normal;color:#333;white-space:nowrap;transform:scaleX(0.9000);transform-origin:left center;">Verschrottet:</div><svg style="position:absolute;left:1268px;top:174px" width="10" height="10" viewBox="0 0 10 10"><rect x="0.5" y="0.5" width="9" height="9" fill="#fff" stroke="#9a9a9a"/></svg><div style="left:989px;top:247px;width:351px;height:463px;background:#f0f0f0;border:1px solid #c8c8c8;box-sizing:border-box"></div><div style="left:1049px;top:232px;width:112px;height:15px;background:#dedede;border:1px solid #c8c8c8;border-bottom:none;box-sizing:border-box"></div><div style="left:1052px;top:234.0px;height:12px;line-height:12px;font-size:8.5px;font-weight:normal;color:#333;white-space:nowrap;transform:scaleX(0.9059);transform-origin:left center;">2. Bedienung und Wartung</div><div style="left:1161px;top:232px;width:48px;height:15px;background:#dedede;border:1px solid #c8c8c8;border-bottom:none;box-sizing:border-box"></div><div style="left:1164px;top:234.0px;height:12px;line-height:12px;font-size:8.5px;font-weight:normal;color:#333;white-space:nowrap;transform:scaleX(0.9059);transform-origin:left center;">3. Partner</div><div style="left:1209px;top:232px;width:43px;height:15px;background:#dedede;border:1px solid #c8c8c8;border-bottom:none;box-sizing:border-box"></div><div style="left:1212px;top:234.0px;height:12px;line-height:12px;font-size:8.5px;font-weight:normal;color:#333;white-space:nowrap;transform:scaleX(0.9059);transform-origin:left center;">4. Werte</div><div style="left:989px;top:230px;width:60px;height:18px;background:#f0f0f0;border:1px solid #c8c8c8;border-bottom:none;box-sizing:border-box"></div><div style="left:995px;top:233.5px;height:12px;line-height:12px;font-size:8.5px;font-weight:bold;color:#222;white-space:nowrap;transform:scaleX(0.9765);transform-origin:left center;">1. Allgemein</div><div style="left:998px;top:255px;width:333px;height:87px;background:#f0f0f0;border:1px solid #cfcfcf;box-sizing:border-box"></div><div style="left:998px;top:255px;width:333px;height:15px;background:#d7d7d7"></div><div style="left:1006px;top:256.5px;height:12px;line-height:12px;font-size:8.5px;font-weight:bold;color:#222;white-space:nowrap;transform:scaleX(0.9647);transform-origin:left center;">Bezeichnung</div><div style="left:1005px;top:301.0px;height:12px;line-height:12px;font-size:8.5px;font-weight:normal;color:#333;white-space:nowrap;transform:scaleX(0.9000);transform-origin:left center;">Bezeichnung:</div><div style="left:1060px;top:279px;width:262px;height:56px;background:#fff;border:1px solid #b4b4b4;box-sizing:border-box"></div><div style="left:1062.5px;top:279.0px;height:12px;line-height:12px;font-size:8.5px;font-weight:normal;color:#222;white-space:nowrap;transform:scaleX(0.8941);transform-origin:left center;">Bagger, RH 6.5 Hydraulikbagger mit Raupenfahrwerk</div><div style="left:1062.5px;top:288.0px;height:12px;line-height:12px;font-size:8.5px;font-weight:normal;color:#222;white-space:nowrap;transform:scaleX(0.8941);transform-origin:left center;">Straßenbaukolonne</div><div style="left:1311px;top:280px;width:10px;height:54px;background:#fff;border-left:1px solid #eee"></div><svg style="position:absolute;left:1313px;top:284px" width="6" height="4" viewBox="0 0 6 4"><path d="M0.5 3.5 L3 0.5 L5.5 3.5Z" fill="#bbb"/></svg><svg style="position:absolute;left:1313px;top:325px" width="6" height="4" viewBox="0 0 6 4"><path d="M0.5 0.5 L3 3.5 L5.5 0.5Z" fill="#bbb"/></svg><div style="left:998px;top:346px;width:332px;height:131px;background:#f0f0f0;border:1px solid #cfcfcf;box-sizing:border-box"></div><div style="left:998px;top:346px;width:332px;height:14px;background:#d7d7d7"></div><div style="left:1006px;top:347.0px;height:12px;line-height:12px;font-size:8.5px;font-weight:bold;color:#222;white-space:nowrap;transform:scaleX(0.9647);transform-origin:left center;">Gerätedaten</div><div style="left:1005.5px;top:370.0px;height:12px;line-height:12px;font-size:8.5px;font-weight:normal;color:#333;white-space:nowrap;transform:scaleX(0.9000);transform-origin:left center;">Hersteller:</div><div style="left:1005.5px;top:387.0px;height:12px;line-height:12px;font-size:8.5px;font-weight:normal;color:#333;white-space:nowrap;transform:scaleX(0.9000);transform-origin:left center;">Fahrgestellnummer:</div><div style="left:1005.5px;top:404.5px;height:12px;line-height:12px;font-size:8.5px;font-weight:normal;color:#333;white-space:nowrap;transform:scaleX(0.9000);transform-origin:left center;">Amtliches Kennzeichen:</div><div style="left:1005.5px;top:421.5px;height:12px;line-height:12px;font-size:8.5px;font-weight:normal;color:#333;white-space:nowrap;transform:scaleX(0.9000);transform-origin:left center;">Leistung:</div><div style="left:1005.5px;top:438.5px;height:12px;line-height:12px;font-size:8.5px;font-weight:normal;color:#333;white-space:nowrap;transform:scaleX(0.9000);transform-origin:left center;">Antriebsart:</div><div style="left:1005.5px;top:455.5px;height:12px;line-height:12px;font-size:8.5px;font-weight:normal;color:#333;white-space:nowrap;transform:scaleX(0.9000);transform-origin:left center;">Schadstoffklasse:</div><div style="left:1094px;top:369px;width:229px;height:14px;background:#fff;border:1px solid #b4b4b4;box-sizing:border-box"></div><svg style="position:absolute;left:1314px;top:375px" width="5" height="3" viewBox="0 0 5 3"><path d="M0 0 H5 L2.5 2.6Z" fill="#555"/></svg><svg style="position:absolute;left:1303px;top:373px" width="6" height="6" viewBox="0 0 6 6"><path d="M1 1 L5 5 M5 1 L1 5" stroke="#d5223a" stroke-width="1.1"/></svg><div style="left:1094px;top:386px;width:229px;height:14px;background:#fff;border:1px solid #b4b4b4;box-sizing:border-box"></div><div style="left:1097px;top:387.0px;height:12px;line-height:12px;font-size:8.5px;font-weight:normal;color:#222;white-space:nowrap;transform:scaleX(0.9176);transform-origin:left center;">D-OK-11-123C</div><div style="left:1094px;top:403px;width:77px;height:14px;background:#fff;border:1px solid #b4b4b4;box-sizing:border-box"></div><div style="left:1097px;top:404.0px;height:12px;line-height:12px;font-size:8.5px;font-weight:normal;color:#222;white-space:nowrap;transform:scaleX(0.9176);transform-origin:left center;">BI-HF 2006</div><div style="left:1094px;top:420px;width:77px;height:14px;background:#fff;border:1px solid #b4b4b4;box-sizing:border-box"></div><div style="left:1090px;width:77px;text-align:right;top:421.0px;height:12px;line-height:12px;font-size:8.5px;font-weight:normal;color:#222;white-space:nowrap;transform:scaleX(0.9176);transform-origin:right center;">113,000 KW</div><div style="left:1094px;top:437px;width:77px;height:14px;background:#fff;border:1px solid #b4b4b4;box-sizing:border-box"></div><div style="left:1094px;top:454px;width:77px;height:14px;background:#fff;border:1px solid #b4b4b4;box-sizing:border-box"></div><svg style="position:absolute;left:1162px;top:460px" width="5" height="3" viewBox="0 0 5 3"><path d="M0 0 H5 L2.5 2.6Z" fill="#555"/></svg><svg style="position:absolute;left:1151px;top:458px" width="6" height="6" viewBox="0 0 6 6"><path d="M1 1 L5 5 M5 1 L1 5" stroke="#d5223a" stroke-width="1.1"/></svg><div style="left:1180px;top:404.5px;height:12px;line-height:12px;font-size:8.5px;font-weight:normal;color:#333;white-space:nowrap;transform:scaleX(0.9000);transform-origin:left center;">Mehrfacheinsatz:</div><svg style="position:absolute;left:1269px;top:406px" width="10" height="10" viewBox="0 0 10 10"><rect x="0.5" y="0.5" width="9" height="9" fill="#fff" stroke="#9a9a9a"/></svg><div style="left:1180px;top:421.5px;height:12px;line-height:12px;font-size:8.5px;font-weight:normal;color:#333;white-space:nowrap;transform:scaleX(0.9000);transform-origin:left center;">Transportgerät:</div><svg style="position:absolute;left:1269px;top:422px" width="10" height="10" viewBox="0 0 10 10"><rect x="0.5" y="0.5" width="9" height="9" fill="#fff" stroke="#9a9a9a"/><path d="M2.4 5.0 L4.2 7.0 L7.8 2.8" fill="none" stroke="#505050" stroke-width="1"/></svg><div style="left:1180px;top:438.5px;height:12px;line-height:12px;font-size:8.5px;font-weight:normal;color:#333;white-space:nowrap;transform:scaleX(0.9000);transform-origin:left center;">Selbstfahrend:</div><svg style="position:absolute;left:1269px;top:440px" width="10" height="10" viewBox="0 0 10 10"><rect x="0.5" y="0.5" width="9" height="9" fill="#fff" stroke="#9a9a9a"/></svg><div style="left:1180px;top:455.5px;height:12px;line-height:12px;font-size:8.5px;font-weight:normal;color:#333;white-space:nowrap;transform:scaleX(0.9000);transform-origin:left center;">Fremdgerät:</div><svg style="position:absolute;left:1269px;top:456px" width="10" height="10" viewBox="0 0 10 10"><rect x="0.5" y="0.5" width="9" height="9" fill="#fff" stroke="#9a9a9a"/></svg><div style="left:998px;top:480px;width:200px;height:80px;background:#f0f0f0;border:1px solid #cfcfcf;box-sizing:border-box"></div><div style="left:998px;top:480px;width:200px;height:15px;background:#d7d7d7"></div><div style="left:1006px;top:481.5px;height:12px;line-height:12px;font-size:8.5px;font-weight:bold;color:#222;white-space:nowrap;transform:scaleX(0.9647);transform-origin:left center;">Gewichte</div><div style="left:1005.5px;top:504.5px;height:12px;line-height:12px;font-size:8.5px;font-weight:normal;color:#333;white-space:nowrap;transform:scaleX(0.9000);transform-origin:left center;">Zul. Gesamtgewicht:</div><div style="left:1084px;top:504px;width:106px;height:14px;background:#fff;border:1px solid #b4b4b4;box-sizing:border-box"></div><div style="left:1005.5px;top:521.5px;height:12px;line-height:12px;font-size:8.5px;font-weight:normal;color:#333;white-space:nowrap;transform:scaleX(0.9000);transform-origin:left center;">Nutzlast:</div><div style="left:1084px;top:520px;width:106px;height:14px;background:#fff;border:1px solid #b4b4b4;box-sizing:border-box"></div><div style="left:1080px;width:106px;text-align:right;top:521.0px;height:12px;line-height:12px;font-size:8.5px;font-weight:normal;color:#222;white-space:nowrap;transform:scaleX(0.9176);transform-origin:right center;">6,000 kg</div><div style="left:1005.5px;top:538.5px;height:12px;line-height:12px;font-size:8.5px;font-weight:normal;color:#333;white-space:nowrap;transform:scaleX(0.9000);transform-origin:left center;">Leergewicht:</div><div style="left:1084px;top:538px;width:106px;height:14px;background:#fff;border:1px solid #b4b4b4;box-sizing:border-box"></div><div style="left:1080px;width:106px;text-align:right;top:539.0px;height:12px;line-height:12px;font-size:8.5px;font-weight:normal;color:#222;white-space:nowrap;transform:scaleX(0.9176);transform-origin:right center;">21.500,000 kg</div><div style="left:1201px;top:480px;width:129px;height:80px;background:#f0f0f0;border:1px solid #cfcfcf;box-sizing:border-box"></div><div style="left:1201px;top:480px;width:129px;height:15px;background:#d7d7d7"></div><div style="left:1209px;top:481.5px;height:12px;line-height:12px;font-size:8.5px;font-weight:bold;color:#222;white-space:nowrap;transform:scaleX(0.9647);transform-origin:left center;">Abmessungen</div><div style="left:1208px;top:504.5px;height:12px;line-height:12px;font-size:8.5px;font-weight:normal;color:#333;white-space:nowrap;transform:scaleX(0.9000);transform-origin:left center;">Gerätelänge:</div><div style="left:1264px;top:504px;width:59px;height:14px;background:#fff;border:1px solid #b4b4b4;box-sizing:border-box"></div><div style="left:1260px;width:59px;text-align:right;top:505.0px;height:12px;line-height:12px;font-size:8.5px;font-weight:normal;color:#222;white-space:nowrap;transform:scaleX(0.9176);transform-origin:right center;">12,000</div><div style="left:1208px;top:521.5px;height:12px;line-height:12px;font-size:8.5px;font-weight:normal;color:#333;white-space:nowrap;transform:scaleX(0.9000);transform-origin:left center;">Gerätebreite:</div><div style="left:1264px;top:520px;width:59px;height:14px;background:#fff;border:1px solid #b4b4b4;box-sizing:border-box"></div><div style="left:1260px;width:59px;text-align:right;top:521.0px;height:12px;line-height:12px;font-size:8.5px;font-weight:normal;color:#222;white-space:nowrap;transform:scaleX(0.9176);transform-origin:right center;">3,500</div><div style="left:1208px;top:538.5px;height:12px;line-height:12px;font-size:8.5px;font-weight:normal;color:#333;white-space:nowrap;transform:scaleX(0.9000);transform-origin:left center;">Gerätehöhe:</div><div style="left:1264px;top:538px;width:59px;height:14px;background:#fff;border:1px solid #b4b4b4;box-sizing:border-box"></div><div style="left:1260px;width:59px;text-align:right;top:539.0px;height:12px;line-height:12px;font-size:8.5px;font-weight:normal;color:#222;white-space:nowrap;transform:scaleX(0.9176);transform-origin:right center;">3,500</div><div style="left:998px;top:563px;width:333px;height:132px;background:#f0f0f0;border:1px solid #cfcfcf;box-sizing:border-box"></div><div style="left:998px;top:563px;width:333px;height:15px;background:#d7d7d7"></div><div style="left:1006px;top:564.5px;height:12px;line-height:12px;font-size:8.5px;font-weight:bold;color:#222;white-space:nowrap;transform:scaleX(0.9647);transform-origin:left center;">Geräteart</div><div style="left:1005.5px;top:588.0px;height:12px;line-height:12px;font-size:8.5px;font-weight:normal;color:#333;white-space:nowrap;transform:scaleX(0.9000);transform-origin:left center;">Gerätetyp:</div><div style="left:1089px;top:587px;width:234px;height:14px;background:#fff;border:1px solid #b4b4b4;box-sizing:border-box"></div><div style="left:1092px;top:588.0px;height:12px;line-height:12px;font-size:8.5px;font-weight:normal;color:#222;white-space:nowrap;transform:scaleX(0.9176);transform-origin:left center;">D. 1 Hydraulikbagger</div><svg style="position:absolute;left:1314px;top:593px" width="5" height="3" viewBox="0 0 5 3"><path d="M0 0 H5 L2.5 2.6Z" fill="#555"/></svg><svg style="position:absolute;left:1303px;top:591px" width="6" height="6" viewBox="0 0 6 6"><path d="M1 1 L5 5 M5 1 L1 5" stroke="#d5223a" stroke-width="1.1"/></svg><div style="left:1005.5px;top:605.0px;height:12px;line-height:12px;font-size:8.5px;font-weight:normal;color:#333;white-space:nowrap;transform:scaleX(0.9000);transform-origin:left center;">Gerätekategorie:</div><div style="left:1089px;top:604px;width:234px;height:14px;background:#fff;border:1px solid #b4b4b4;box-sizing:border-box"></div><div style="left:1092px;top:605.0px;height:12px;line-height:12px;font-size:8.5px;font-weight:normal;color:#222;white-space:nowrap;transform:scaleX(0.9176);transform-origin:left center;">D Geräte Erdbewegung,Verdicht.</div><svg style="position:absolute;left:1314px;top:610px" width="5" height="3" viewBox="0 0 5 3"><path d="M0 0 H5 L2.5 2.6Z" fill="#555"/></svg><svg style="position:absolute;left:1303px;top:608px" width="6" height="6" viewBox="0 0 6 6"><path d="M1 1 L5 5 M5 1 L1 5" stroke="#d5223a" stroke-width="1.1"/></svg><div style="left:1005.5px;top:622.0px;height:12px;line-height:12px;font-size:8.5px;font-weight:normal;color:#333;white-space:nowrap;transform:scaleX(0.9000);transform-origin:left center;">Dispositionskategorie:</div><div style="left:1089px;top:621px;width:234px;height:14px;background:#fff;border:1px solid #b4b4b4;box-sizing:border-box"></div><div style="left:1092px;top:622.0px;height:12px;line-height:12px;font-size:8.5px;font-weight:normal;color:#222;white-space:nowrap;transform:scaleX(0.9176);transform-origin:left center;">5010: Bagger</div><svg style="position:absolute;left:1314px;top:627px" width="5" height="3" viewBox="0 0 5 3"><path d="M0 0 H5 L2.5 2.6Z" fill="#555"/></svg><svg style="position:absolute;left:1303px;top:625px" width="6" height="6" viewBox="0 0 6 6"><path d="M1 1 L5 5 M5 1 L1 5" stroke="#d5223a" stroke-width="1.1"/></svg><div style="left:1005.5px;top:639.5px;height:12px;line-height:12px;font-size:8.5px;font-weight:normal;color:#333;white-space:nowrap;transform:scaleX(0.9000);transform-origin:left center;">Mengenart:</div><div style="left:1089px;top:638px;width:234px;height:14px;background:#f0f0f0;border:1px solid #d8d8d8;box-sizing:border-box"></div><div style="left:1092px;top:639.0px;height:12px;line-height:12px;font-size:8.5px;font-weight:normal;color:#222;white-space:nowrap;transform:scaleX(0.9176);transform-origin:left center;">Einzelgerät (E)</div><svg style="position:absolute;left:1314px;top:644px" width="5" height="3" viewBox="0 0 5 3"><path d="M0 0 H5 L2.5 2.6Z" fill="#bbb"/></svg><div style="left:1005.5px;top:656.0px;height:12px;line-height:12px;font-size:8.5px;font-weight:normal;color:#333;white-space:nowrap;transform:scaleX(0.9000);transform-origin:left center;">Leistungsart:</div><div style="left:1089px;top:655px;width:234px;height:14px;background:#f0f0f0;border:1px solid #d8d8d8;box-sizing:border-box"></div><div style="left:1092px;top:656.0px;height:12px;line-height:12px;font-size:8.5px;font-weight:normal;color:#222;white-space:nowrap;transform:scaleX(0.9176);transform-origin:left center;">Vorhaltegerät (V)</div><svg style="position:absolute;left:1314px;top:661px" width="5" height="3" viewBox="0 0 5 3"><path d="M0 0 H5 L2.5 2.6Z" fill="#bbb"/></svg><div style="left:1005.5px;top:673.0px;height:12px;line-height:12px;font-size:8.5px;font-weight:normal;color:#333;white-space:nowrap;transform:scaleX(0.9000);transform-origin:left center;">Leistungsermittlung:</div><div style="left:1089px;top:672px;width:234px;height:14px;background:#f0f0f0;border:1px solid #d8d8d8;box-sizing:border-box"></div><svg style="position:absolute;left:1314px;top:678px" width="5" height="3" viewBox="0 0 5 3"><path d="M0 0 H5 L2.5 2.6Z" fill="#bbb"/></svg><div style="left:988.5px;top:721.5px;height:12px;line-height:12px;font-size:8.5px;font-weight:normal;color:#333;white-space:nowrap;transform:scaleX(0.9000);transform-origin:left center;">Angelegt am:</div><div style="left:1057px;top:720px;width:92px;height:14px;background:#f0f0f0;border:1px solid #d8d8d8;box-sizing:border-box"></div><svg style="position:absolute;left:1140px;top:726px" width="5" height="3" viewBox="0 0 5 3"><path d="M0 0 H5 L2.5 2.6Z" fill="#555"/></svg><div style="left:1178px;top:721.5px;height:12px;line-height:12px;font-size:8.5px;font-weight:normal;color:#333;white-space:nowrap;transform:scaleX(0.9000);transform-origin:left center;">Geändert am:</div><div style="left:1246px;top:720px;width:93px;height:14px;background:#f0f0f0;border:1px solid #d8d8d8;box-sizing:border-box"></div><div style="left:1249px;top:721.0px;height:12px;line-height:12px;font-size:8.5px;font-weight:normal;color:#222;white-space:nowrap;transform:scaleX(0.9176);transform-origin:left center;">03.11.2025</div><svg style="position:absolute;left:1330px;top:726px" width="5" height="3" viewBox="0 0 5 3"><path d="M0 0 H5 L2.5 2.6Z" fill="#555"/></svg><div style="left:988.5px;top:738.5px;height:12px;line-height:12px;font-size:8.5px;font-weight:normal;color:#333;white-space:nowrap;transform:scaleX(0.9000);transform-origin:left center;">Angelegt von:</div><div style="left:1057px;top:737px;width:92px;height:14px;background:#f0f0f0;border:1px solid #d8d8d8;box-sizing:border-box"></div><div style="left:1178px;top:738.5px;height:12px;line-height:12px;font-size:8.5px;font-weight:normal;color:#333;white-space:nowrap;transform:scaleX(0.9000);transform-origin:left center;">Geändert von:</div><div style="left:1246px;top:737px;width:93px;height:14px;background:#f0f0f0;border:1px solid #d8d8d8;box-sizing:border-box"></div><div style="left:1249px;top:738.0px;height:12px;line-height:12px;font-size:8.5px;font-weight:normal;color:#222;white-space:nowrap;transform:scaleX(0.9176);transform-origin:left center;">JR</div><div style="left:0px;top:745px;width:1360px;height:20px;background:#dcdcdc"></div><div style="left:0px;top:745px;width:1360px;height:1px;background:#e6e6e6"></div><div style="left:4px;top:750.5px;height:12px;line-height:12px;font-size:8.5px;font-weight:bold;color:#111;white-space:nowrap;transform:scaleX(1.0235);transform-origin:left center;">2025.10 vom 28.10.2025</div><div style="left:988px;top:750.5px;height:12px;line-height:12px;font-size:8.5px;font-weight:normal;color:#222;white-space:nowrap;transform:scaleX(0.8706);transform-origin:left center;">200: VT-200-Husemann _Fritz GmbH</div><div style="left:1112px;top:748px;width:1px;height:16px;background:#c4c4c4"></div><div style="left:1151px;top:748px;width:1px;height:16px;background:#c4c4c4"></div><div style="left:1262px;top:748px;width:1px;height:16px;background:#c4c4c4"></div><div style="left:1345px;top:748px;width:1px;height:16px;background:#c4c4c4"></div><svg style="position:absolute;left:1118px;top:752px" width="12" height="9" viewBox="0 0 12 9"><rect x="0" y="0" width="12" height="3" fill="#222"/><rect x="0" y="3" width="12" height="3" fill="#d52b1e"/><rect x="0" y="6" width="12" height="3" fill="#f3c400"/></svg><div style="left:1132px;top:750.5px;height:12px;line-height:12px;font-size:8.5px;font-weight:normal;color:#222;white-space:nowrap;transform:scaleX(0.9412);transform-origin:left center;">DEU</div><svg style="position:absolute;left:1156px;top:751px" width="11" height="11" viewBox="0 0 11 11"><circle cx="5.5" cy="5.5" r="5.2" fill="#2da44e"/><path d="M2.8 5.6 L4.8 7.6 L8.3 3.8" fill="none" stroke="#fff" stroke-width="1.4"/></svg><div style="left:1170.5px;top:750.5px;height:12px;line-height:12px;font-size:8.5px;font-weight:normal;color:#222;white-space:nowrap;transform:scaleX(0.8941);transform-origin:left center;">Mit Dokuarchiv verbunden</div><div style="left:1268px;top:750.5px;height:12px;line-height:12px;font-size:8.5px;font-weight:normal;color:#222;white-space:nowrap;transform:scaleX(0.9176);transform-origin:left center;">9142: Seidel, Torsten</div><div style="left:1352px;top:750.5px;height:12px;line-height:12px;font-size:8.5px;font-weight:normal;color:#222;white-space:nowrap;transform:scaleX(0.9412);transform-origin:left center;">ts</div>
</body></html>
